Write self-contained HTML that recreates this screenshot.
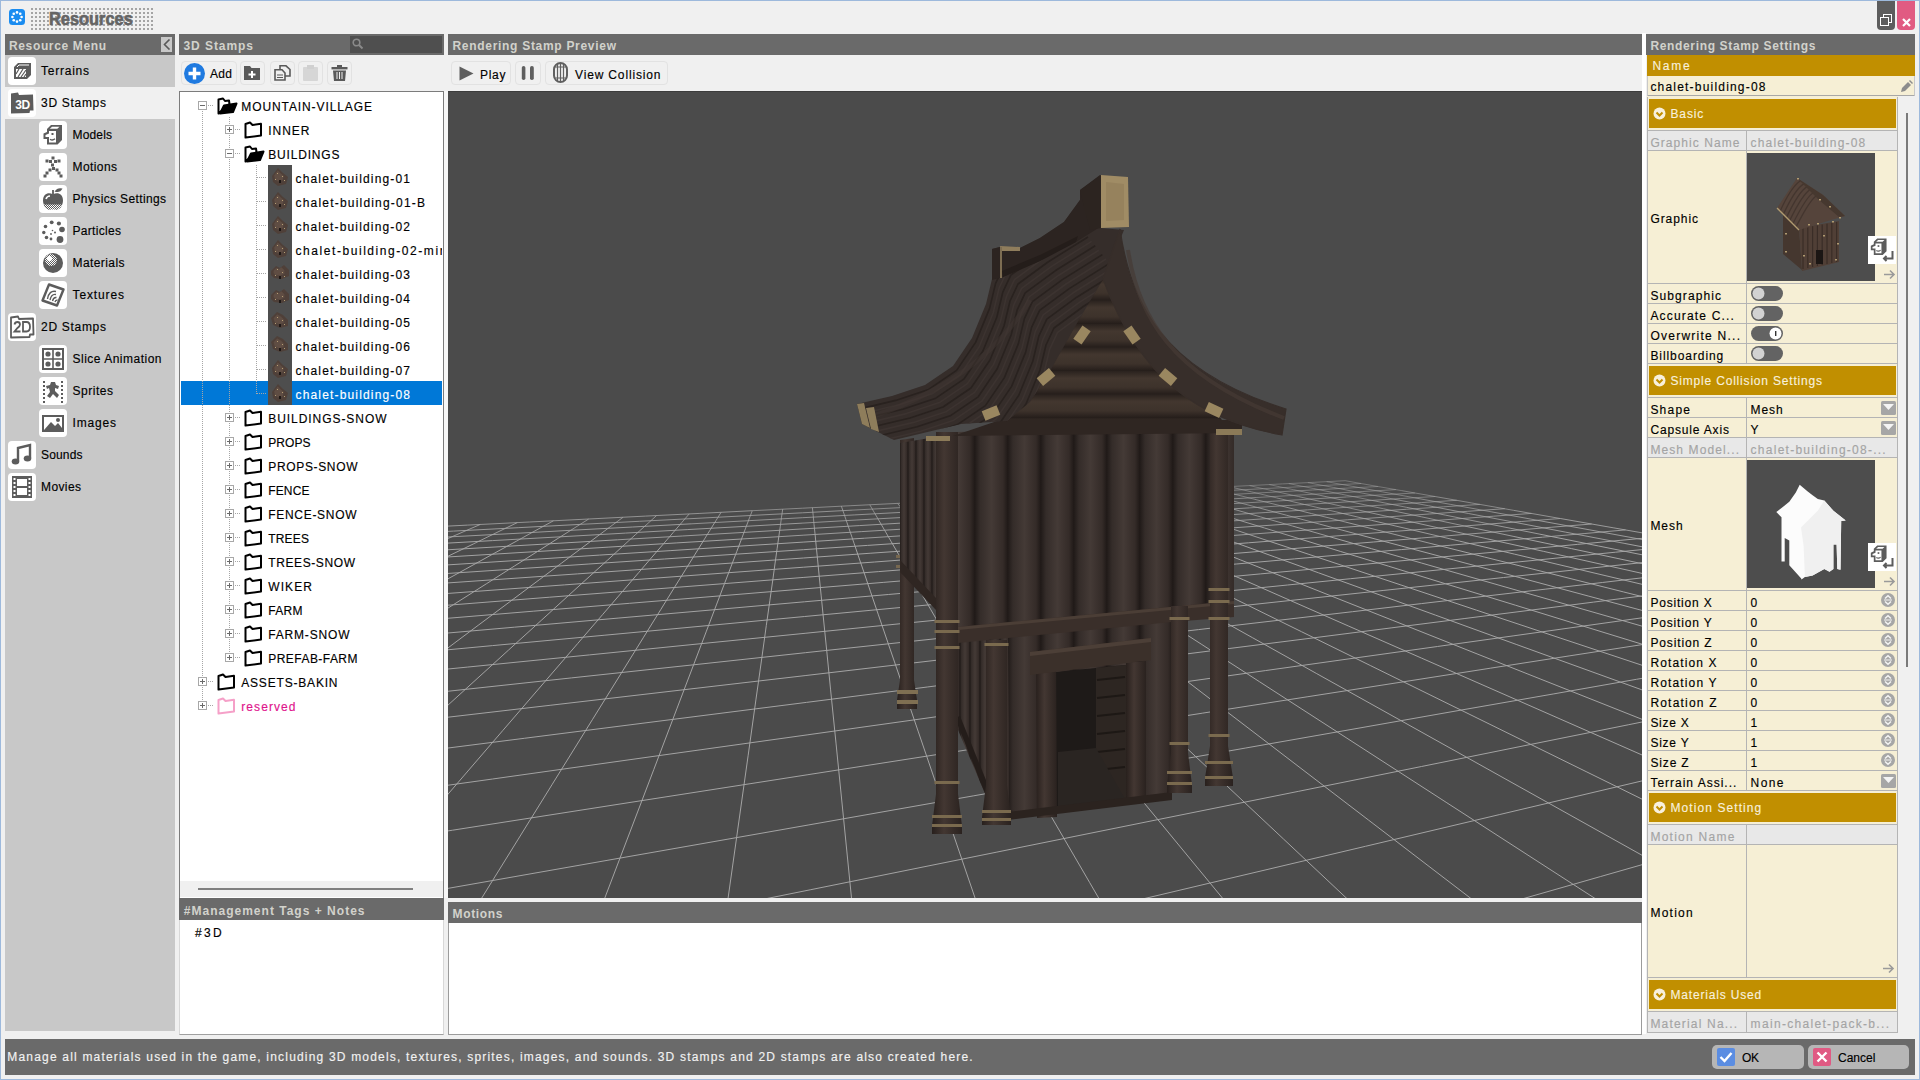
<!DOCTYPE html>
<html><head><meta charset="utf-8"><title>Resources</title>
<style>
html,body{margin:0;padding:0;width:1920px;height:1080px;overflow:hidden;background:#f0f0f0}
.a{position:absolute}
.t{font-family:"Liberation Sans",sans-serif;line-height:14px;white-space:pre;-webkit-text-stroke:0.15px currentColor}
svg{position:absolute;overflow:hidden}
</style></head><body>
<div class="a" style="left:0px;top:0px;width:1920px;height:1080px;background:#f0f0f0;"></div>
<div class="a" style="left:0;top:0;width:1918px;height:1078px;border:1px solid #9db9dc"></div>
<svg class="a" style="left:9px;top:9px;" width="16" height="16" viewBox="0 0 16 16"><rect x="0" y="0" width="16" height="16" rx="3.5" fill="#1a8cf0"/><circle cx="12.60" cy="8.00" r="1.3" fill="#fff"/><circle cx="11.25" cy="11.25" r="1.3" fill="#fff"/><circle cx="8.00" cy="12.60" r="1.3" fill="#fff"/><circle cx="4.75" cy="11.25" r="1.3" fill="#fff"/><circle cx="3.40" cy="8.00" r="1.3" fill="#fff"/><circle cx="4.75" cy="4.75" r="1.3" fill="#fff"/><circle cx="8.00" cy="3.40" r="1.3" fill="#fff"/><circle cx="11.25" cy="4.75" r="1.3" fill="#fff"/></svg>
<svg class="a" style="left:31px;top:8px" width="122" height="22" viewBox="0 0 122 22"><defs><pattern id="tdots" patternUnits="userSpaceOnUse" width="4" height="4"><rect width="2" height="2" fill="#a4a4a4"/></pattern></defs><rect width="122" height="22" fill="url(#tdots)"/></svg>
<div class="a" style="left:49px;top:6.5px;font:bold 19px 'Liberation Sans';line-height:24px;color:#646464;-webkit-text-stroke:0.7px #646464;transform:scaleX(0.862);transform-origin:0 0;white-space:pre;text-shadow:0 0 1px #f0f0f0">Resources</div>
<div class="a" style="left:1877px;top:1px;width:18px;height:29px;background:#5d5d5d;border-radius:0 0 4px 4px"></div>
<svg class="a" style="left:1880px;top:14px;" width="12" height="12" viewBox="0 0 12 12"><rect x="3.5" y="0.5" width="8" height="8" fill="none" stroke="#fff" stroke-width="1"/><rect x="0.5" y="3.5" width="8" height="8" fill="#5d5d5d" stroke="#fff" stroke-width="1"/></svg>
<div class="a" style="left:1897px;top:1px;width:18px;height:29px;background:#e15b82;border-radius:0 0 4px 4px"></div>
<svg class="a" style="left:1902px;top:18px;" width="9" height="9" viewBox="0 0 9 9"><path d="M1 1L8 8M8 1L1 8" stroke="#fff" stroke-width="2.2"/></svg>
<div class="a" style="left:5px;top:34px;width:170px;height:21px;background:#6a6a6a;"></div>
<div class="a t" style="left:9.00px;top:39px;color:#d2d2cc;font-size:12px;font-weight:700;letter-spacing:0.637px;-webkit-text-stroke:0;">Resource Menu</div>
<div class="a" style="left:161px;top:37px;width:11px;height:15px;background:#c8c8c8;"></div>
<svg class="a" style="left:163px;top:39px;" width="8" height="11" viewBox="0 0 8 11"><path d="M6.5 0.5L1.5 5.5L6.5 10.5" fill="none" stroke="#5a5a5a" stroke-width="1.6"/></svg>
<div class="a" style="left:5px;top:55px;width:170px;height:976px;background:#c8c8c8;"></div>
<div class="a" style="left:5px;top:87px;width:170px;height:32px;background:#f0f0f0;"></div>
<div class="a" style="left:8px;top:57px;width:28px;height:28px;background:#fff;border-radius:4px"></div>
<svg class="a" style="left:8px;top:57px;" width="28" height="28" viewBox="0 0 28 28"><path d="M6 10L10 6L23 6L23 18L19 22L6 22Z" fill="#5c5c5c"/><rect x="8" y="12" width="10" height="8" fill="#fff"/><path d="M8 17L11 12M10 20L15 12M13 20L18 13M16 20L18 17" stroke="#5c5c5c" stroke-width="1.2"/><path d="M9 10L11 8L21 8" stroke="#fff" stroke-width="1" fill="none"/></svg>
<div class="a t" style="left:41.00px;top:64px;color:#000;font-size:12px;font-weight:400;letter-spacing:0.759px;">Terrains</div>
<div class="a" style="left:8px;top:89px;width:28px;height:28px;background:#fff;border-radius:4px"></div>
<svg class="a" style="left:8px;top:89px;" width="28" height="28" viewBox="0 0 28 28"><path d="M3 7L3 4.5L10 3.5L11 6L25 5.5L25.5 21.5L22 21.5L21.5 24L3 24.5Z" fill="#5c5c5c"/><text x="14.5" y="19.5" font-family="Liberation Sans" font-weight="bold" font-size="12" fill="#fff" text-anchor="middle" letter-spacing="-0.5">3D</text></svg>
<div class="a t" style="left:41.00px;top:96px;color:#000;font-size:12px;font-weight:400;letter-spacing:0.705px;">3D Stamps</div>
<div class="a" style="left:39px;top:121px;width:28px;height:28px;background:#fff;border-radius:4px"></div>
<svg class="a" style="left:39px;top:121px;" width="28" height="28" viewBox="0 0 28 28"><path d="M8 8L12 4L23 4L23 19L18.5 23.5L8 23.5L8 18L4.5 18L4.5 12.5L8 11Z" fill="#5c5c5c"/><path d="M10 10L17 10L17 21.5L10 21.5L10 16L6.5 16L6.5 14L10 12.5Z" fill="#fff"/><path d="M10.8 7.8L13 5.8L20.5 5.8L18.3 7.8Z" fill="#fff"/><rect x="12.5" y="12" width="2" height="2" fill="#5c5c5c"/><path d="M11 18.2Q13.5 20 16 17.8" stroke="#5c5c5c" stroke-width="1.4" fill="none"/></svg>
<div class="a t" style="left:72.50px;top:128px;color:#000;font-size:12px;font-weight:400;letter-spacing:0.163px;">Models</div>
<div class="a" style="left:39px;top:153px;width:28px;height:28px;background:#fff;border-radius:4px"></div>
<svg class="a" style="left:39px;top:153px;" width="28" height="28" viewBox="0 0 28 28"><rect x="12.5" y="3.5" width="3" height="3" fill="#5c5c5c"/><rect x="6.5" y="6.5" width="3" height="3" fill="#5c5c5c"/><rect x="10.0" y="7.0" width="3" height="3" fill="#5c5c5c"/><rect x="15.0" y="7.0" width="3" height="3" fill="#5c5c5c"/><rect x="18.5" y="6.5" width="3" height="3" fill="#5c5c5c"/><rect x="12.0" y="10.5" width="3" height="3" fill="#5c5c5c"/><rect x="13.0" y="14.0" width="3" height="3" fill="#5c5c5c"/><rect x="9.5" y="15.5" width="3" height="3" fill="#5c5c5c"/><rect x="16.5" y="15.5" width="3" height="3" fill="#5c5c5c"/><rect x="6.5" y="18.5" width="3" height="3" fill="#5c5c5c"/><rect x="18.5" y="18.5" width="3" height="3" fill="#5c5c5c"/><rect x="4.5" y="21.5" width="3" height="3" fill="#5c5c5c"/><rect x="20.5" y="21.5" width="3" height="3" fill="#5c5c5c"/></svg>
<div class="a t" style="left:72.50px;top:160px;color:#000;font-size:12px;font-weight:400;letter-spacing:0.411px;">Motions</div>
<div class="a" style="left:39px;top:185px;width:28px;height:28px;background:#fff;border-radius:4px"></div>
<svg class="a" style="left:39px;top:185px;" width="28" height="28" viewBox="0 0 28 28"><defs><pattern id="dith2" patternUnits="userSpaceOnUse" width="2" height="2"><rect width="2" height="2" fill="#5c5c5c"/><rect width="1" height="1" fill="#fff"/><rect x="1" y="1" width="1" height="1" fill="#fff"/></pattern></defs><path d="M14 9.5C10 7 4 8.5 4 15.5C4 20.5 7.5 24.5 10.5 24.5C12 24.5 13 23.8 14 23.8C15 23.8 16 24.5 17.5 24.5C20.5 24.5 24 20.5 24 15.5C24 8.5 18 7 14 9.5Z" fill="#5c5c5c"/><path d="M14 10L14 5" stroke="#5c5c5c" stroke-width="1.8"/><path d="M15.5 6.5Q18.5 2 23.5 3.5Q21 8.5 15.5 6.5Z" fill="#5c5c5c"/><path d="M7 14Q8 11 11 11" stroke="#fff" stroke-width="1.6" fill="none"/><path d="M4.8 19.5L23.2 19.5Q22 23 19 24.5L9 24.5Q6 23 4.8 19.5Z" fill="url(#dith2)"/></svg>
<div class="a t" style="left:72.50px;top:192px;color:#000;font-size:12px;font-weight:400;letter-spacing:0.364px;">Physics Settings</div>
<div class="a" style="left:39px;top:217px;width:28px;height:28px;background:#fff;border-radius:4px"></div>
<svg class="a" style="left:39px;top:217px;" width="28" height="28" viewBox="0 0 28 28"><circle cx="12.7" cy="5.3" r="1.9" fill="#5c5c5c"/><circle cx="19.9" cy="6.5" r="2.1" fill="#5c5c5c"/><circle cx="6.5" cy="9.5" r="1.8" fill="#5c5c5c"/><circle cx="23" cy="12.5" r="2.8" fill="#5c5c5c"/><circle cx="4.8" cy="15.5" r="1.7" fill="#5c5c5c"/><circle cx="7.5" cy="20.5" r="1.8" fill="#5c5c5c"/><circle cx="12" cy="22" r="1.4" fill="#5c5c5c"/><circle cx="21" cy="22.5" r="3.4" fill="#5c5c5c"/><circle cx="13.5" cy="13.5" r="0.8" fill="#5c5c5c"/><circle cx="16" cy="15.5" r="1.0" fill="#5c5c5c"/><circle cx="12" cy="17" r="0.9" fill="#5c5c5c"/></svg>
<div class="a t" style="left:72.50px;top:224px;color:#000;font-size:12px;font-weight:400;letter-spacing:0.311px;">Particles</div>
<div class="a" style="left:39px;top:249px;width:28px;height:28px;background:#fff;border-radius:4px"></div>
<svg class="a" style="left:39px;top:249px;" width="28" height="28" viewBox="0 0 28 28"><defs><pattern id="dith" patternUnits="userSpaceOnUse" width="2" height="2"><rect width="1" height="1" fill="#fff"/><rect x="1" y="1" width="1" height="1" fill="#fff"/></pattern></defs><circle cx="14" cy="14" r="10" fill="#5c5c5c"/><circle cx="12" cy="11" r="6" fill="url(#dith)"/><circle cx="10.5" cy="9.5" r="2.5" fill="#fff"/></svg>
<div class="a t" style="left:72.50px;top:256px;color:#000;font-size:12px;font-weight:400;letter-spacing:0.414px;">Materials</div>
<div class="a" style="left:39px;top:281px;width:28px;height:28px;background:#fff;border-radius:4px"></div>
<svg class="a" style="left:39px;top:281px;" width="28" height="28" viewBox="0 0 28 28"><path d="M10 3.5L24.5 8.5L18 24.5L3.5 19.5Z" fill="none" stroke="#5c5c5c" stroke-width="2.4" stroke-linejoin="round"/><path d="M8.5 18Q10 9 17 10.5M11 19Q12.5 12.5 17 13.5M13.5 20Q14.5 16 17.5 16.5M16 21Q16.5 19 18.5 19" stroke="#5c5c5c" stroke-width="1.4" fill="none"/></svg>
<div class="a t" style="left:72.50px;top:288px;color:#000;font-size:12px;font-weight:400;letter-spacing:0.877px;">Textures</div>
<div class="a" style="left:8px;top:313px;width:28px;height:28px;background:#fff;border-radius:4px"></div>
<svg class="a" style="left:8px;top:313px;" width="28" height="28" viewBox="0 0 28 28"><path d="M3 7L3 4.5L10 3.5L11 6L25 5.5L25.5 21.5L22 21.5L21.5 24L3 24.5Z" fill="#fff" stroke="#5c5c5c" stroke-width="1.8" stroke-linejoin="round"/><path d="M6.5 11.5Q7 9 9.5 9Q12 9 12 11.5Q12 13 9.5 15L6.5 18.5L12.5 18.5" fill="none" stroke="#5c5c5c" stroke-width="1.8"/><path d="M15 9L18.5 9Q22 9 22 13.8Q22 18.5 18.5 18.5L15 18.5Z" fill="none" stroke="#5c5c5c" stroke-width="1.8"/></svg>
<div class="a t" style="left:41.00px;top:320px;color:#000;font-size:12px;font-weight:400;letter-spacing:0.705px;">2D Stamps</div>
<div class="a" style="left:39px;top:345px;width:28px;height:28px;background:#fff;border-radius:4px"></div>
<svg class="a" style="left:39px;top:345px;" width="28" height="28" viewBox="0 0 28 28"><rect x="4" y="4" width="20" height="20" fill="none" stroke="#5c5c5c" stroke-width="2"/><path d="M14 4L14 24M4 14L24 14" stroke="#5c5c5c" stroke-width="1.6"/><circle cx="9" cy="9" r="2.6" fill="#5c5c5c"/><circle cx="19" cy="9" r="2.6" fill="#5c5c5c"/><circle cx="9" cy="19" r="2.6" fill="#5c5c5c"/><circle cx="19" cy="19" r="2.6" fill="#5c5c5c"/></svg>
<div class="a t" style="left:72.50px;top:352px;color:#000;font-size:12px;font-weight:400;letter-spacing:0.497px;">Slice Animation</div>
<div class="a" style="left:39px;top:377px;width:28px;height:28px;background:#fff;border-radius:4px"></div>
<svg class="a" style="left:39px;top:377px;" width="28" height="28" viewBox="0 0 28 28"><rect x="4" y="4" width="2" height="2" fill="#5c5c5c"/><rect x="22" y="4" width="2" height="2" fill="#5c5c5c"/><rect x="4" y="8" width="2" height="2" fill="#5c5c5c"/><rect x="22" y="8" width="2" height="2" fill="#5c5c5c"/><rect x="4" y="12" width="2" height="2" fill="#5c5c5c"/><rect x="22" y="12" width="2" height="2" fill="#5c5c5c"/><rect x="4" y="16" width="2" height="2" fill="#5c5c5c"/><rect x="22" y="16" width="2" height="2" fill="#5c5c5c"/><rect x="4" y="20" width="2" height="2" fill="#5c5c5c"/><rect x="22" y="20" width="2" height="2" fill="#5c5c5c"/><rect x="4" y="24" width="2" height="2" fill="#5c5c5c"/><rect x="22" y="24" width="2" height="2" fill="#5c5c5c"/><path d="M12 5L16 5L17 8L20 9L19 12L16 11L16 14L20 18L18 21L14 17L11 21L8 19L11 15L10 11L8 12L7 9L11 8Z" fill="#5c5c5c"/></svg>
<div class="a t" style="left:72.50px;top:384px;color:#000;font-size:12px;font-weight:400;letter-spacing:0.523px;">Sprites</div>
<div class="a" style="left:39px;top:409px;width:28px;height:28px;background:#fff;border-radius:4px"></div>
<svg class="a" style="left:39px;top:409px;" width="28" height="28" viewBox="0 0 28 28"><rect x="4" y="7" width="20" height="15" fill="none" stroke="#5c5c5c" stroke-width="2"/><path d="M5 21L12 13L16 17L19 14L23 19L23 21Z" fill="#5c5c5c"/><circle cx="19" cy="11" r="2" fill="#5c5c5c"/></svg>
<div class="a t" style="left:72.50px;top:416px;color:#000;font-size:12px;font-weight:400;letter-spacing:0.828px;">Images</div>
<div class="a" style="left:8px;top:441px;width:28px;height:28px;background:#fff;border-radius:4px"></div>
<svg class="a" style="left:8px;top:441px;" width="28" height="28" viewBox="0 0 28 28"><path d="M10 20L10 7L22 4L22 17" stroke="#5c5c5c" stroke-width="2.4" fill="none"/><ellipse cx="7.5" cy="20.5" rx="3.8" ry="3" fill="#5c5c5c"/><ellipse cx="19.5" cy="17.5" rx="3.8" ry="3" fill="#5c5c5c"/></svg>
<div class="a t" style="left:41.00px;top:448px;color:#000;font-size:12px;font-weight:400;letter-spacing:0.159px;">Sounds</div>
<div class="a" style="left:8px;top:473px;width:28px;height:28px;background:#fff;border-radius:4px"></div>
<svg class="a" style="left:8px;top:473px;" width="28" height="28" viewBox="0 0 28 28"><rect x="4" y="3" width="20" height="22" fill="#5c5c5c"/><rect x="9" y="6" width="10" height="7" fill="#fff"/><rect x="9" y="15" width="10" height="7" fill="#fff"/><rect x="5.5" y="5" width="2" height="2" fill="#fff"/><rect x="20.5" y="5" width="2" height="2" fill="#fff"/><rect x="5.5" y="9" width="2" height="2" fill="#fff"/><rect x="20.5" y="9" width="2" height="2" fill="#fff"/><rect x="5.5" y="13" width="2" height="2" fill="#fff"/><rect x="20.5" y="13" width="2" height="2" fill="#fff"/><rect x="5.5" y="17" width="2" height="2" fill="#fff"/><rect x="20.5" y="17" width="2" height="2" fill="#fff"/><rect x="5.5" y="21" width="2" height="2" fill="#fff"/><rect x="20.5" y="21" width="2" height="2" fill="#fff"/></svg>
<div class="a t" style="left:41.00px;top:480px;color:#000;font-size:12px;font-weight:400;letter-spacing:0.397px;">Movies</div>
<div class="a" style="left:179px;top:34px;width:265px;height:21px;background:#6a6a6a;"></div>
<div class="a t" style="left:183.50px;top:39px;color:#d2d2cc;font-size:12px;font-weight:700;letter-spacing:0.934px;-webkit-text-stroke:0;">3D Stamps</div>
<div class="a" style="left:350px;top:36px;width:92px;height:17px;background:#4f4f4f;"></div>
<svg class="a" style="left:352px;top:38px;" width="12" height="12" viewBox="0 0 12 12"><circle cx="4.5" cy="4.5" r="3.3" fill="none" stroke="#8a8a8a" stroke-width="1.6"/><path d="M7 7L10.5 10.5" stroke="#8a8a8a" stroke-width="2"/></svg>
<div class="a" style="left:181px;top:61px;width:54px;height:22px;border:1px solid #e2e2e2;border-radius:4px;background:#f0f0f0"></div>
<div class="a" style="left:240px;top:61px;width:23px;height:22px;border:1px solid #e2e2e2;border-radius:4px;background:#f0f0f0"></div>
<div class="a" style="left:270px;top:61px;width:23px;height:22px;border:1px solid #e2e2e2;border-radius:4px;background:#f0f0f0"></div>
<div class="a" style="left:298px;top:61px;width:23px;height:22px;border:1px solid #e2e2e2;border-radius:4px;background:#f0f0f0"></div>
<div class="a" style="left:327px;top:61px;width:23px;height:22px;border:1px solid #e2e2e2;border-radius:4px;background:#f0f0f0"></div>
<svg class="a" style="left:184px;top:63px;" width="21" height="21" viewBox="0 0 21 21"><circle cx="10.5" cy="10.5" r="10.5" fill="#1f7ae0"/><path d="M10.5 4.5V16.5M4.5 10.5H16.5" stroke="#fff" stroke-width="3.4"/></svg>
<div class="a t" style="left:210.00px;top:67px;color:#000;font-size:12px;font-weight:400;letter-spacing:0.320px;">Add</div>
<svg class="a" style="left:244px;top:65px;" width="17" height="15" viewBox="0 0 17 15"><path d="M0 1L6 1L7.5 3L16 3L16 15L0 15Z" fill="#5a5a5a"/><path d="M8 6V13M4.5 9.5H11.5" stroke="#fff" stroke-width="2"/></svg>
<svg class="a" style="left:274px;top:65px;" width="17" height="16" viewBox="0 0 17 16"><path d="M6 0.8H12L16 4.5V11H6Z" fill="none" stroke="#5a5a5a" stroke-width="1.6"/><path d="M1 4.8H8L11 8V15H1Z" fill="#f0f0f0" stroke="#5a5a5a" stroke-width="1.6"/><path d="M3 10H9M3 12.5H9" stroke="#5a5a5a" stroke-width="1.1"/></svg>
<svg class="a" style="left:302px;top:65px;" width="17" height="16" viewBox="0 0 17 16"><rect x="1" y="2" width="15" height="14" rx="1" fill="#d6d6d6"/><rect x="5" y="0" width="7" height="4" fill="#d0d0d0"/></svg>
<svg class="a" style="left:331px;top:65px;" width="17" height="16" viewBox="0 0 17 16"><rect x="0.5" y="2" width="16" height="2.4" fill="#5a5a5a"/><rect x="6" y="0" width="5" height="2" fill="#5a5a5a"/><path d="M2 5.5H15L14 16H3Z" fill="#5a5a5a"/><path d="M6 7V14M8.5 7V14M11 7V14" stroke="#f0f0f0" stroke-width="1"/></svg>
<div class="a" style="left:179px;top:91px;width:265px;height:807px;background:#ffffff;box-sizing:border-box;border-top:1px solid #7c7c7c;border-left:1px solid #7c7c7c;border-right:1px solid #7c7c7c"></div>
<div class="a" style="left:181px;top:381px;width:261px;height:24px;background:#0078d7;"></div>
<div class="a" style="left:202px;top:111px;width:1px;height:590px;background:repeating-linear-gradient(to bottom,#a6a6a6 0 1px,transparent 1px 2px)"></div>
<div class="a" style="left:229px;top:117px;width:1px;height:536px;background:repeating-linear-gradient(to bottom,#a6a6a6 0 1px,transparent 1px 2px)"></div>
<div class="a" style="left:256px;top:165px;width:1px;height:230px;background:repeating-linear-gradient(to bottom,#a6a6a6 0 1px,transparent 1px 2px)"></div>
<svg class="a" style="left:198px;top:101px;" width="9" height="9" viewBox="0 0 9 9"><rect x="0.5" y="0.5" width="8" height="8" fill="#fff" stroke="#a8a8a8" stroke-width="1"/><path d="M2 4.5H7" stroke="#6a6a6a" stroke-width="1"/></svg>
<div class="a" style="left:208px;top:105px;width:6px;height:1px;background:repeating-linear-gradient(to right,#a6a6a6 0 1px,transparent 1px 2px)"></div>
<svg class="a" style="left:217px;top:97px;" width="21" height="18" viewBox="0 0 21 18"><path d="M1.5 2.5L6 1.5L8 4L12 3.5L12.5 7L1.5 16.5Z" fill="#fff" stroke="#000" stroke-width="2" stroke-linejoin="round"/><path d="M3 16.5L7 8.5L19.5 6.5L16 15Z" fill="#000" stroke="#000" stroke-width="2" stroke-linejoin="round"/></svg>
<div class="a t" style="left:241.25px;top:100px;color:#000000;font-size:12px;font-weight:400;letter-spacing:0.907px;">MOUNTAIN-VILLAGE</div>
<svg class="a" style="left:225px;top:125px;" width="9" height="9" viewBox="0 0 9 9"><rect x="0.5" y="0.5" width="8" height="8" fill="#fff" stroke="#a8a8a8" stroke-width="1"/><path d="M2 4.5H7" stroke="#6a6a6a" stroke-width="1"/><path d="M4.5 2V7" stroke="#6a6a6a" stroke-width="1"/></svg>
<div class="a" style="left:235px;top:129px;width:6px;height:1px;background:repeating-linear-gradient(to right,#a6a6a6 0 1px,transparent 1px 2px)"></div>
<svg class="a" style="left:244px;top:121px;" width="21" height="18" viewBox="0 0 21 18"><path d="M1.5 3L6 1.5L8.5 4L17 2.8L17 14.5L1.5 16.5Z" fill="#fff" stroke="#000" stroke-width="2" stroke-linejoin="round"/></svg>
<div class="a t" style="left:268.25px;top:124px;color:#000000;font-size:12px;font-weight:400;letter-spacing:0.977px;">INNER</div>
<svg class="a" style="left:225px;top:149px;" width="9" height="9" viewBox="0 0 9 9"><rect x="0.5" y="0.5" width="8" height="8" fill="#fff" stroke="#a8a8a8" stroke-width="1"/><path d="M2 4.5H7" stroke="#6a6a6a" stroke-width="1"/></svg>
<div class="a" style="left:235px;top:153px;width:6px;height:1px;background:repeating-linear-gradient(to right,#a6a6a6 0 1px,transparent 1px 2px)"></div>
<svg class="a" style="left:244px;top:145px;" width="21" height="18" viewBox="0 0 21 18"><path d="M1.5 2.5L6 1.5L8 4L12 3.5L12.5 7L1.5 16.5Z" fill="#fff" stroke="#000" stroke-width="2" stroke-linejoin="round"/><path d="M3 16.5L7 8.5L19.5 6.5L16 15Z" fill="#000" stroke="#000" stroke-width="2" stroke-linejoin="round"/></svg>
<div class="a t" style="left:268.25px;top:148px;color:#000000;font-size:12px;font-weight:400;letter-spacing:0.820px;">BUILDINGS</div>
<div class="a" style="left:257px;top:177px;width:10px;height:1px;background:repeating-linear-gradient(to right,#a6a6a6 0 1px,transparent 1px 2px)"></div>
<div class="a t" style="left:295.50px;top:172px;color:#000000;font-size:12px;font-weight:400;letter-spacing:1.163px;">chalet-building-01</div>
<div class="a" style="left:257px;top:201px;width:10px;height:1px;background:repeating-linear-gradient(to right,#a6a6a6 0 1px,transparent 1px 2px)"></div>
<div class="a t" style="left:295.50px;top:196px;color:#000000;font-size:12px;font-weight:400;letter-spacing:1.198px;">chalet-building-01-B</div>
<div class="a" style="left:257px;top:225px;width:10px;height:1px;background:repeating-linear-gradient(to right,#a6a6a6 0 1px,transparent 1px 2px)"></div>
<div class="a t" style="left:295.50px;top:220px;color:#000000;font-size:12px;font-weight:400;letter-spacing:1.163px;">chalet-building-02</div>
<div class="a" style="left:257px;top:249px;width:10px;height:1px;background:repeating-linear-gradient(to right,#a6a6a6 0 1px,transparent 1px 2px)"></div>
<div class="a t" style="left:295.50px;top:244px;color:#000000;font-size:12px;font-weight:400;letter-spacing:1.560px;">chalet-building-02-mirror</div>
<div class="a" style="left:257px;top:273px;width:10px;height:1px;background:repeating-linear-gradient(to right,#a6a6a6 0 1px,transparent 1px 2px)"></div>
<div class="a t" style="left:295.50px;top:268px;color:#000000;font-size:12px;font-weight:400;letter-spacing:1.163px;">chalet-building-03</div>
<div class="a" style="left:257px;top:297px;width:10px;height:1px;background:repeating-linear-gradient(to right,#a6a6a6 0 1px,transparent 1px 2px)"></div>
<div class="a t" style="left:295.50px;top:292px;color:#000000;font-size:12px;font-weight:400;letter-spacing:1.163px;">chalet-building-04</div>
<div class="a" style="left:257px;top:321px;width:10px;height:1px;background:repeating-linear-gradient(to right,#a6a6a6 0 1px,transparent 1px 2px)"></div>
<div class="a t" style="left:295.50px;top:316px;color:#000000;font-size:12px;font-weight:400;letter-spacing:1.163px;">chalet-building-05</div>
<div class="a" style="left:257px;top:345px;width:10px;height:1px;background:repeating-linear-gradient(to right,#a6a6a6 0 1px,transparent 1px 2px)"></div>
<div class="a t" style="left:295.50px;top:340px;color:#000000;font-size:12px;font-weight:400;letter-spacing:1.163px;">chalet-building-06</div>
<div class="a" style="left:257px;top:369px;width:10px;height:1px;background:repeating-linear-gradient(to right,#a6a6a6 0 1px,transparent 1px 2px)"></div>
<div class="a t" style="left:295.50px;top:364px;color:#000000;font-size:12px;font-weight:400;letter-spacing:1.163px;">chalet-building-07</div>
<div class="a" style="left:257px;top:393px;width:10px;height:1px;background:repeating-linear-gradient(to right,#a6a6a6 0 1px,transparent 1px 2px)"></div>
<div class="a t" style="left:295.50px;top:388px;color:#ffffff;font-size:12px;font-weight:400;letter-spacing:1.163px;">chalet-building-08</div>
<svg class="a" style="left:225px;top:413px;" width="9" height="9" viewBox="0 0 9 9"><rect x="0.5" y="0.5" width="8" height="8" fill="#fff" stroke="#a8a8a8" stroke-width="1"/><path d="M2 4.5H7" stroke="#6a6a6a" stroke-width="1"/><path d="M4.5 2V7" stroke="#6a6a6a" stroke-width="1"/></svg>
<div class="a" style="left:235px;top:417px;width:6px;height:1px;background:repeating-linear-gradient(to right,#a6a6a6 0 1px,transparent 1px 2px)"></div>
<svg class="a" style="left:244px;top:409px;" width="21" height="18" viewBox="0 0 21 18"><path d="M1.5 3L6 1.5L8.5 4L17 2.8L17 14.5L1.5 16.5Z" fill="#fff" stroke="#000" stroke-width="2" stroke-linejoin="round"/></svg>
<div class="a t" style="left:268.25px;top:412px;color:#000000;font-size:12px;font-weight:400;letter-spacing:0.941px;">BUILDINGS-SNOW</div>
<svg class="a" style="left:225px;top:437px;" width="9" height="9" viewBox="0 0 9 9"><rect x="0.5" y="0.5" width="8" height="8" fill="#fff" stroke="#a8a8a8" stroke-width="1"/><path d="M2 4.5H7" stroke="#6a6a6a" stroke-width="1"/><path d="M4.5 2V7" stroke="#6a6a6a" stroke-width="1"/></svg>
<div class="a" style="left:235px;top:441px;width:6px;height:1px;background:repeating-linear-gradient(to right,#a6a6a6 0 1px,transparent 1px 2px)"></div>
<svg class="a" style="left:244px;top:433px;" width="21" height="18" viewBox="0 0 21 18"><path d="M1.5 3L6 1.5L8.5 4L17 2.8L17 14.5L1.5 16.5Z" fill="#fff" stroke="#000" stroke-width="2" stroke-linejoin="round"/></svg>
<div class="a t" style="left:268.25px;top:436px;color:#000000;font-size:12px;font-weight:400;letter-spacing:0.059px;">PROPS</div>
<svg class="a" style="left:225px;top:461px;" width="9" height="9" viewBox="0 0 9 9"><rect x="0.5" y="0.5" width="8" height="8" fill="#fff" stroke="#a8a8a8" stroke-width="1"/><path d="M2 4.5H7" stroke="#6a6a6a" stroke-width="1"/><path d="M4.5 2V7" stroke="#6a6a6a" stroke-width="1"/></svg>
<div class="a" style="left:235px;top:465px;width:6px;height:1px;background:repeating-linear-gradient(to right,#a6a6a6 0 1px,transparent 1px 2px)"></div>
<svg class="a" style="left:244px;top:457px;" width="21" height="18" viewBox="0 0 21 18"><path d="M1.5 3L6 1.5L8.5 4L17 2.8L17 14.5L1.5 16.5Z" fill="#fff" stroke="#000" stroke-width="2" stroke-linejoin="round"/></svg>
<div class="a t" style="left:268.25px;top:460px;color:#000000;font-size:12px;font-weight:400;letter-spacing:0.656px;">PROPS-SNOW</div>
<svg class="a" style="left:225px;top:485px;" width="9" height="9" viewBox="0 0 9 9"><rect x="0.5" y="0.5" width="8" height="8" fill="#fff" stroke="#a8a8a8" stroke-width="1"/><path d="M2 4.5H7" stroke="#6a6a6a" stroke-width="1"/><path d="M4.5 2V7" stroke="#6a6a6a" stroke-width="1"/></svg>
<div class="a" style="left:235px;top:489px;width:6px;height:1px;background:repeating-linear-gradient(to right,#a6a6a6 0 1px,transparent 1px 2px)"></div>
<svg class="a" style="left:244px;top:481px;" width="21" height="18" viewBox="0 0 21 18"><path d="M1.5 3L6 1.5L8.5 4L17 2.8L17 14.5L1.5 16.5Z" fill="#fff" stroke="#000" stroke-width="2" stroke-linejoin="round"/></svg>
<div class="a t" style="left:268.25px;top:484px;color:#000000;font-size:12px;font-weight:400;letter-spacing:0.145px;">FENCE</div>
<svg class="a" style="left:225px;top:509px;" width="9" height="9" viewBox="0 0 9 9"><rect x="0.5" y="0.5" width="8" height="8" fill="#fff" stroke="#a8a8a8" stroke-width="1"/><path d="M2 4.5H7" stroke="#6a6a6a" stroke-width="1"/><path d="M4.5 2V7" stroke="#6a6a6a" stroke-width="1"/></svg>
<div class="a" style="left:235px;top:513px;width:6px;height:1px;background:repeating-linear-gradient(to right,#a6a6a6 0 1px,transparent 1px 2px)"></div>
<svg class="a" style="left:244px;top:505px;" width="21" height="18" viewBox="0 0 21 18"><path d="M1.5 3L6 1.5L8.5 4L17 2.8L17 14.5L1.5 16.5Z" fill="#fff" stroke="#000" stroke-width="2" stroke-linejoin="round"/></svg>
<div class="a t" style="left:268.25px;top:508px;color:#000000;font-size:12px;font-weight:400;letter-spacing:0.694px;">FENCE-SNOW</div>
<svg class="a" style="left:225px;top:533px;" width="9" height="9" viewBox="0 0 9 9"><rect x="0.5" y="0.5" width="8" height="8" fill="#fff" stroke="#a8a8a8" stroke-width="1"/><path d="M2 4.5H7" stroke="#6a6a6a" stroke-width="1"/><path d="M4.5 2V7" stroke="#6a6a6a" stroke-width="1"/></svg>
<div class="a" style="left:235px;top:537px;width:6px;height:1px;background:repeating-linear-gradient(to right,#a6a6a6 0 1px,transparent 1px 2px)"></div>
<svg class="a" style="left:244px;top:529px;" width="21" height="18" viewBox="0 0 21 18"><path d="M1.5 3L6 1.5L8.5 4L17 2.8L17 14.5L1.5 16.5Z" fill="#fff" stroke="#000" stroke-width="2" stroke-linejoin="round"/></svg>
<div class="a t" style="left:268.25px;top:532px;color:#000000;font-size:12px;font-weight:400;letter-spacing:0.184px;">TREES</div>
<svg class="a" style="left:225px;top:557px;" width="9" height="9" viewBox="0 0 9 9"><rect x="0.5" y="0.5" width="8" height="8" fill="#fff" stroke="#a8a8a8" stroke-width="1"/><path d="M2 4.5H7" stroke="#6a6a6a" stroke-width="1"/><path d="M4.5 2V7" stroke="#6a6a6a" stroke-width="1"/></svg>
<div class="a" style="left:235px;top:561px;width:6px;height:1px;background:repeating-linear-gradient(to right,#a6a6a6 0 1px,transparent 1px 2px)"></div>
<svg class="a" style="left:244px;top:553px;" width="21" height="18" viewBox="0 0 21 18"><path d="M1.5 3L6 1.5L8.5 4L17 2.8L17 14.5L1.5 16.5Z" fill="#fff" stroke="#000" stroke-width="2" stroke-linejoin="round"/></svg>
<div class="a t" style="left:268.25px;top:556px;color:#000000;font-size:12px;font-weight:400;letter-spacing:0.601px;">TREES-SNOW</div>
<svg class="a" style="left:225px;top:581px;" width="9" height="9" viewBox="0 0 9 9"><rect x="0.5" y="0.5" width="8" height="8" fill="#fff" stroke="#a8a8a8" stroke-width="1"/><path d="M2 4.5H7" stroke="#6a6a6a" stroke-width="1"/><path d="M4.5 2V7" stroke="#6a6a6a" stroke-width="1"/></svg>
<div class="a" style="left:235px;top:585px;width:6px;height:1px;background:repeating-linear-gradient(to right,#a6a6a6 0 1px,transparent 1px 2px)"></div>
<svg class="a" style="left:244px;top:577px;" width="21" height="18" viewBox="0 0 21 18"><path d="M1.5 3L6 1.5L8.5 4L17 2.8L17 14.5L1.5 16.5Z" fill="#fff" stroke="#000" stroke-width="2" stroke-linejoin="round"/></svg>
<div class="a t" style="left:268.25px;top:580px;color:#000000;font-size:12px;font-weight:400;letter-spacing:1.102px;">WIKER</div>
<svg class="a" style="left:225px;top:605px;" width="9" height="9" viewBox="0 0 9 9"><rect x="0.5" y="0.5" width="8" height="8" fill="#fff" stroke="#a8a8a8" stroke-width="1"/><path d="M2 4.5H7" stroke="#6a6a6a" stroke-width="1"/><path d="M4.5 2V7" stroke="#6a6a6a" stroke-width="1"/></svg>
<div class="a" style="left:235px;top:609px;width:6px;height:1px;background:repeating-linear-gradient(to right,#a6a6a6 0 1px,transparent 1px 2px)"></div>
<svg class="a" style="left:244px;top:601px;" width="21" height="18" viewBox="0 0 21 18"><path d="M1.5 3L6 1.5L8.5 4L17 2.8L17 14.5L1.5 16.5Z" fill="#fff" stroke="#000" stroke-width="2" stroke-linejoin="round"/></svg>
<div class="a t" style="left:268.25px;top:604px;color:#000000;font-size:12px;font-weight:400;letter-spacing:0.302px;">FARM</div>
<svg class="a" style="left:225px;top:629px;" width="9" height="9" viewBox="0 0 9 9"><rect x="0.5" y="0.5" width="8" height="8" fill="#fff" stroke="#a8a8a8" stroke-width="1"/><path d="M2 4.5H7" stroke="#6a6a6a" stroke-width="1"/><path d="M4.5 2V7" stroke="#6a6a6a" stroke-width="1"/></svg>
<div class="a" style="left:235px;top:633px;width:6px;height:1px;background:repeating-linear-gradient(to right,#a6a6a6 0 1px,transparent 1px 2px)"></div>
<svg class="a" style="left:244px;top:625px;" width="21" height="18" viewBox="0 0 21 18"><path d="M1.5 3L6 1.5L8.5 4L17 2.8L17 14.5L1.5 16.5Z" fill="#fff" stroke="#000" stroke-width="2" stroke-linejoin="round"/></svg>
<div class="a t" style="left:268.25px;top:628px;color:#000000;font-size:12px;font-weight:400;letter-spacing:0.822px;">FARM-SNOW</div>
<svg class="a" style="left:225px;top:653px;" width="9" height="9" viewBox="0 0 9 9"><rect x="0.5" y="0.5" width="8" height="8" fill="#fff" stroke="#a8a8a8" stroke-width="1"/><path d="M2 4.5H7" stroke="#6a6a6a" stroke-width="1"/><path d="M4.5 2V7" stroke="#6a6a6a" stroke-width="1"/></svg>
<div class="a" style="left:235px;top:657px;width:6px;height:1px;background:repeating-linear-gradient(to right,#a6a6a6 0 1px,transparent 1px 2px)"></div>
<svg class="a" style="left:244px;top:649px;" width="21" height="18" viewBox="0 0 21 18"><path d="M1.5 3L6 1.5L8.5 4L17 2.8L17 14.5L1.5 16.5Z" fill="#fff" stroke="#000" stroke-width="2" stroke-linejoin="round"/></svg>
<div class="a t" style="left:268.25px;top:652px;color:#000000;font-size:12px;font-weight:400;letter-spacing:0.456px;">PREFAB-FARM</div>
<svg class="a" style="left:198px;top:677px;" width="9" height="9" viewBox="0 0 9 9"><rect x="0.5" y="0.5" width="8" height="8" fill="#fff" stroke="#a8a8a8" stroke-width="1"/><path d="M2 4.5H7" stroke="#6a6a6a" stroke-width="1"/><path d="M4.5 2V7" stroke="#6a6a6a" stroke-width="1"/></svg>
<div class="a" style="left:208px;top:681px;width:6px;height:1px;background:repeating-linear-gradient(to right,#a6a6a6 0 1px,transparent 1px 2px)"></div>
<svg class="a" style="left:217px;top:673px;" width="21" height="18" viewBox="0 0 21 18"><path d="M1.5 3L6 1.5L8.5 4L17 2.8L17 14.5L1.5 16.5Z" fill="#fff" stroke="#000" stroke-width="2" stroke-linejoin="round"/></svg>
<div class="a t" style="left:241.25px;top:676px;color:#000000;font-size:12px;font-weight:400;letter-spacing:0.808px;">ASSETS-BAKIN</div>
<svg class="a" style="left:198px;top:701px;" width="9" height="9" viewBox="0 0 9 9"><rect x="0.5" y="0.5" width="8" height="8" fill="#fff" stroke="#a8a8a8" stroke-width="1"/><path d="M2 4.5H7" stroke="#6a6a6a" stroke-width="1"/><path d="M4.5 2V7" stroke="#6a6a6a" stroke-width="1"/></svg>
<div class="a" style="left:208px;top:705px;width:6px;height:1px;background:repeating-linear-gradient(to right,#a6a6a6 0 1px,transparent 1px 2px)"></div>
<svg class="a" style="left:217px;top:697px;" width="21" height="18" viewBox="0 0 21 18"><path d="M1.5 3L6 1.5L8.5 4L17 2.8L17 14.5L1.5 16.5Z" fill="#fff" stroke="#f5a0c8" stroke-width="2" stroke-linejoin="round"/></svg>
<div class="a t" style="left:241.25px;top:700px;color:#e0148c;font-size:12px;font-weight:400;letter-spacing:1.080px;">reserved</div>
<div class="a" style="left:268px;top:165px;width:24px;height:240px;background:#4e4e4e;"></div>
<svg class="a" style="left:268px;top:165px;" width="24" height="24" viewBox="0 0 24 24"><polygon points="4,11 10,3 15,8 20,12 18,19 10,21 5,17" fill="#4f4039"/><polygon points="6.2,10.4 9.8,5.6 12.8,8.6 15.8,11.0 14.6,15.2 9.8,16.4 6.8,14.0" fill="#5f4d43"/><rect x="9" y="8" width="1" height="1" fill="#b49d74"/><rect x="14" y="11" width="1" height="1" fill="#b49d74"/><rect x="7" y="14" width="1" height="1" fill="#b49d74"/><rect x="16" y="15" width="1" height="1" fill="#b49d74"/><rect x="12" y="17" width="1" height="1" fill="#b49d74"/><rect x="11" y="15" width="2" height="3" fill="#1e1816"/></svg>
<svg class="a" style="left:268px;top:189px;" width="24" height="24" viewBox="0 0 24 24"><polygon points="4,11 10,3 15,8 20,12 18,19 10,21 5,17" fill="#4f4039"/><polygon points="6.2,10.4 9.8,5.6 12.8,8.6 15.8,11.0 14.6,15.2 9.8,16.4 6.8,14.0" fill="#5f4d43"/><rect x="9" y="8" width="1" height="1" fill="#b49d74"/><rect x="14" y="11" width="1" height="1" fill="#b49d74"/><rect x="7" y="14" width="1" height="1" fill="#b49d74"/><rect x="16" y="15" width="1" height="1" fill="#b49d74"/><rect x="12" y="17" width="1" height="1" fill="#b49d74"/><rect x="11" y="15" width="2" height="3" fill="#1e1816"/></svg>
<svg class="a" style="left:268px;top:213px;" width="24" height="24" viewBox="0 0 24 24"><polygon points="4,11 10,3 15,8 20,12 18,19 10,21 5,17" fill="#4f4039"/><polygon points="6.2,10.4 9.8,5.6 12.8,8.6 15.8,11.0 14.6,15.2 9.8,16.4 6.8,14.0" fill="#5f4d43"/><rect x="9" y="8" width="1" height="1" fill="#b49d74"/><rect x="14" y="11" width="1" height="1" fill="#b49d74"/><rect x="7" y="14" width="1" height="1" fill="#b49d74"/><rect x="16" y="15" width="1" height="1" fill="#b49d74"/><rect x="12" y="17" width="1" height="1" fill="#b49d74"/><rect x="11" y="15" width="2" height="3" fill="#1e1816"/></svg>
<svg class="a" style="left:268px;top:237px;" width="24" height="24" viewBox="0 0 24 24"><polygon points="4,11 10,3 15,8 20,12 18,19 10,21 5,17" fill="#4f4039"/><polygon points="6.2,10.4 9.8,5.6 12.8,8.6 15.8,11.0 14.6,15.2 9.8,16.4 6.8,14.0" fill="#5f4d43"/><rect x="9" y="8" width="1" height="1" fill="#b49d74"/><rect x="14" y="11" width="1" height="1" fill="#b49d74"/><rect x="7" y="14" width="1" height="1" fill="#b49d74"/><rect x="16" y="15" width="1" height="1" fill="#b49d74"/><rect x="12" y="17" width="1" height="1" fill="#b49d74"/><rect x="11" y="15" width="2" height="3" fill="#1e1816"/></svg>
<svg class="a" style="left:268px;top:261px;" width="24" height="24" viewBox="0 0 24 24"><polygon points="3,10 8,5 12,7 16,4 21,9 21,15 14,18 6,17 3,14" fill="#4f4039"/><polygon points="5.6,9.8 8.6,6.8 11.0,8.0 13.4,6.2 16.4,9.2 16.4,12.8 12.2,14.6 7.4,14.0 5.6,12.2" fill="#5f4d43"/><rect x="9" y="8" width="1" height="1" fill="#b49d74"/><rect x="14" y="11" width="1" height="1" fill="#b49d74"/><rect x="7" y="14" width="1" height="1" fill="#b49d74"/><rect x="16" y="15" width="1" height="1" fill="#b49d74"/><rect x="12" y="17" width="1" height="1" fill="#b49d74"/><rect x="11" y="15" width="2" height="3" fill="#1e1816"/></svg>
<svg class="a" style="left:268px;top:285px;" width="24" height="24" viewBox="0 0 24 24"><polygon points="3,10 8,5 12,7 16,4 21,9 21,15 14,18 6,17 3,14" fill="#4f4039"/><polygon points="5.6,9.8 8.6,6.8 11.0,8.0 13.4,6.2 16.4,9.2 16.4,12.8 12.2,14.6 7.4,14.0 5.6,12.2" fill="#5f4d43"/><rect x="9" y="8" width="1" height="1" fill="#b49d74"/><rect x="14" y="11" width="1" height="1" fill="#b49d74"/><rect x="7" y="14" width="1" height="1" fill="#b49d74"/><rect x="16" y="15" width="1" height="1" fill="#b49d74"/><rect x="12" y="17" width="1" height="1" fill="#b49d74"/><rect x="11" y="15" width="2" height="3" fill="#1e1816"/></svg>
<svg class="a" style="left:268px;top:309px;" width="24" height="24" viewBox="0 0 24 24"><polygon points="3,9 9,3 15,6 20,11 20,17 12,19 5,16" fill="#4f4039"/><polygon points="5.6,9.2 9.2,5.6 12.8,7.4 15.8,10.4 15.8,14.0 11.0,15.2 6.8,13.4" fill="#5f4d43"/><rect x="9" y="8" width="1" height="1" fill="#b49d74"/><rect x="14" y="11" width="1" height="1" fill="#b49d74"/><rect x="7" y="14" width="1" height="1" fill="#b49d74"/><rect x="16" y="15" width="1" height="1" fill="#b49d74"/><rect x="12" y="17" width="1" height="1" fill="#b49d74"/><rect x="11" y="15" width="2" height="3" fill="#1e1816"/></svg>
<svg class="a" style="left:268px;top:333px;" width="24" height="24" viewBox="0 0 24 24"><polygon points="3,9 9,3 15,6 20,11 20,17 12,19 5,16" fill="#4f4039"/><polygon points="5.6,9.2 9.2,5.6 12.8,7.4 15.8,10.4 15.8,14.0 11.0,15.2 6.8,13.4" fill="#5f4d43"/><rect x="9" y="8" width="1" height="1" fill="#b49d74"/><rect x="14" y="11" width="1" height="1" fill="#b49d74"/><rect x="7" y="14" width="1" height="1" fill="#b49d74"/><rect x="16" y="15" width="1" height="1" fill="#b49d74"/><rect x="12" y="17" width="1" height="1" fill="#b49d74"/><rect x="11" y="15" width="2" height="3" fill="#1e1816"/></svg>
<svg class="a" style="left:268px;top:357px;" width="24" height="24" viewBox="0 0 24 24"><polygon points="4,11 10,3 15,8 20,12 18,19 10,21 5,17" fill="#4f4039"/><polygon points="6.2,10.4 9.8,5.6 12.8,8.6 15.8,11.0 14.6,15.2 9.8,16.4 6.8,14.0" fill="#5f4d43"/><rect x="9" y="8" width="1" height="1" fill="#b49d74"/><rect x="14" y="11" width="1" height="1" fill="#b49d74"/><rect x="7" y="14" width="1" height="1" fill="#b49d74"/><rect x="16" y="15" width="1" height="1" fill="#b49d74"/><rect x="12" y="17" width="1" height="1" fill="#b49d74"/><rect x="11" y="15" width="2" height="3" fill="#1e1816"/></svg>
<svg class="a" style="left:268px;top:381px;" width="24" height="24" viewBox="0 0 24 24"><polygon points="4,11 10,3 15,8 20,12 18,19 10,21 5,17" fill="#4f4039"/><polygon points="6.2,10.4 9.8,5.6 12.8,8.6 15.8,11.0 14.6,15.2 9.8,16.4 6.8,14.0" fill="#5f4d43"/><rect x="9" y="8" width="1" height="1" fill="#b49d74"/><rect x="14" y="11" width="1" height="1" fill="#b49d74"/><rect x="7" y="14" width="1" height="1" fill="#b49d74"/><rect x="16" y="15" width="1" height="1" fill="#b49d74"/><rect x="12" y="17" width="1" height="1" fill="#b49d74"/><rect x="11" y="15" width="2" height="3" fill="#1e1816"/></svg>
<div class="a" style="left:442px;top:92px;width:1px;height:789px;background:#ffffff;"></div>
<div class="a" style="left:443px;top:91px;width:1px;height:807px;background:#7c7c7c;"></div>
<div class="a" style="left:444px;top:91px;width:4px;height:807px;background:#f7f7f7;"></div>
<div class="a" style="left:180px;top:881px;width:263px;height:16px;background:#f0f0f0;"></div>
<div class="a" style="left:198px;top:888px;width:215px;height:2px;background:#808080;"></div>
<div class="a" style="left:179px;top:898px;width:265px;height:22px;background:#6a6a6a;"></div>
<div class="a t" style="left:183.75px;top:904px;color:#d2d2cc;font-size:12px;font-weight:700;letter-spacing:1.011px;-webkit-text-stroke:0;">#Management Tags + Notes</div>
<div class="a" style="left:179px;top:920px;width:265px;height:115px;background:#ffffff;box-sizing:border-box;border:1px solid #d8d8d8;border-top:none;border-bottom:1px solid #a0a0a0"></div>
<div class="a t" style="left:195.00px;top:926px;color:#000;font-size:12px;font-weight:400;letter-spacing:2.367px;">#3D</div>
<div class="a" style="left:448px;top:34px;width:1194px;height:21px;background:#6a6a6a;"></div>
<div class="a t" style="left:452.50px;top:39px;color:#d2d2cc;font-size:12px;font-weight:700;letter-spacing:0.702px;-webkit-text-stroke:0;">Rendering Stamp Preview</div>
<div class="a" style="left:451px;top:61px;width:58px;height:22px;border:1px solid #e2e2e2;border-radius:4px;background:#f0f0f0"></div>
<div class="a" style="left:515px;top:61px;width:24px;height:22px;border:1px solid #e2e2e2;border-radius:4px;background:#f0f0f0"></div>
<div class="a" style="left:545px;top:61px;width:121px;height:22px;border:1px solid #e2e2e2;border-radius:4px;background:#f0f0f0"></div>
<svg class="a" style="left:459px;top:66px;" width="15" height="15" viewBox="0 0 15 15"><path d="M0.5 0.5L14.5 7.5L0.5 14.5Z" fill="#5f5f5f"/></svg>
<div class="a t" style="left:480.00px;top:68px;color:#000;font-size:12px;font-weight:400;letter-spacing:0.719px;">Play</div>
<svg class="a" style="left:521px;top:65px;" width="14" height="16" viewBox="0 0 14 16"><rect x="0.8" y="1" width="3.6" height="14" rx="1.8" fill="#5f5f5f"/><rect x="9" y="1" width="3.8" height="14" rx="1.8" fill="#5f5f5f"/></svg>
<svg class="a" style="left:553px;top:62px;" width="15" height="21" viewBox="0 0 15 21"><rect x="1" y="1" width="13" height="19" rx="6.5" fill="none" stroke="#5f5f5f" stroke-width="2"/><path d="M4.5 2V19M7.5 2V19M10.5 2V19M2 5H13M2 16H13" stroke="#5f5f5f" stroke-width="1.2"/></svg>
<div class="a t" style="left:575.00px;top:68px;color:#000;font-size:12px;font-weight:400;letter-spacing:0.847px;">View Collision</div>
<svg class="a" style="left:448px;top:91px" width="1194" height="807" viewBox="0 0 1194 807"><rect x="0" y="0" width="1194" height="807" fill="#4b4b4b"/><path d="M897.2 389.7L924.2 394.5M924.2 394.5L954.0 399.7M897.2 389.7L866.3 391.3M866.3 391.3L834.3 392.9M834.3 392.9L801.4 394.6M801.4 394.6L767.4 396.3M767.4 396.3L732.3 398.1M878.7 390.7L905.1 395.5M913.1 392.5L881.5 394.2M881.5 394.2L848.8 395.9M848.8 395.9L815.1 397.7M859.9 391.6L885.6 396.5M929.9 395.5L897.6 397.2M840.8 392.6L865.7 397.6M821.3 393.6L845.4 398.7M801.4 394.6L824.8 399.8" stroke="#a8a8a8" stroke-width="1" fill="none" opacity="0.47" stroke-linecap="butt"/><path d="M954.0 399.7L987.0 405.5M732.3 398.1L695.9 399.9M695.9 399.9L658.4 401.8M658.4 401.8L619.5 403.8M619.5 403.8L579.3 405.8M579.3 405.8L537.6 407.9M905.1 395.5L934.2 400.8M934.2 400.8L966.5 406.8M815.1 397.7L780.3 399.5M780.3 399.5L744.3 401.4M744.3 401.4L707.0 403.3M707.0 403.3L668.4 405.3M668.4 405.3L628.4 407.4M885.6 396.5L913.9 402.0M913.9 402.0L945.5 408.1M897.6 397.2L864.2 399.0M864.2 399.0L829.7 400.9M829.7 400.9L794.0 402.9M794.0 402.9L757.1 404.9M757.1 404.9L718.8 406.9M865.7 397.6L893.3 403.2M893.3 403.2L924.0 409.4M947.8 398.6L914.8 400.5M914.8 400.5L880.6 402.4M880.6 402.4L845.3 404.4M845.3 404.4L808.7 406.5M845.4 398.7L872.2 404.4M966.8 402.0L933.0 403.9M933.0 403.9L898.1 406.0M824.8 399.8L850.7 405.6M987.0 405.5L952.5 407.6M781.1 395.6L803.7 400.9M803.7 400.9L828.7 406.9M760.5 396.7L782.1 402.1M782.1 402.1L806.2 408.2M739.4 397.7L760.2 403.3M760.2 403.3L783.3 409.5M717.9 398.8L737.7 404.5M695.9 399.9L714.8 405.7M673.6 401.0L691.4 407.0M650.7 402.2L667.4 408.3M627.4 403.4L643.0 409.6" stroke="#a8a8a8" stroke-width="1" fill="none" opacity="0.56" stroke-linecap="butt"/><path d="M987.0 405.5L1023.9 412.0M1023.9 412.0L1065.4 419.3M537.6 407.9L494.3 410.1M494.3 410.1L449.5 412.4M449.5 412.4L402.9 414.7M402.9 414.7L354.5 417.2M354.5 417.2L304.3 419.7M966.5 406.8L1002.6 413.4M1002.6 413.4L1043.2 420.8M628.4 407.4L587.0 409.6M587.0 409.6L544.0 411.9M544.0 411.9L499.3 414.2M499.3 414.2L453.0 416.6M453.0 416.6L404.8 419.1M945.5 408.1L980.8 414.8M718.8 406.9L679.1 409.1M679.1 409.1L637.9 411.3M637.9 411.3L595.2 413.7M595.2 413.7L550.8 416.1M550.8 416.1L504.7 418.6M924.0 409.4L958.4 416.3M808.7 406.5L770.7 408.6M770.7 408.6L731.4 410.8M731.4 410.8L690.6 413.1M690.6 413.1L648.2 415.5M648.2 415.5L604.1 418.0M872.2 404.4L902.1 410.7M902.1 410.7L935.6 417.8M898.1 406.0L861.9 408.1M861.9 408.1L824.3 410.3M824.3 410.3L785.4 412.6M785.4 412.6L744.9 415.0M744.9 415.0L702.8 417.5M850.7 405.6L879.6 412.1M879.6 412.1L912.1 419.4M952.5 407.6L916.8 409.8M916.8 409.8L879.6 412.1M879.6 412.1L841.1 414.4M841.1 414.4L801.0 416.9M828.7 406.9L856.7 413.5M856.7 413.5L888.2 420.9M1008.7 409.3L973.4 411.6M973.4 411.6L936.7 413.9M936.7 413.9L898.7 416.3M898.7 416.3L859.1 418.9M806.2 408.2L833.2 414.9M1031.8 413.4L995.7 415.8M995.7 415.8L958.2 418.3M783.3 409.5L809.2 416.4M737.7 404.5L759.8 410.8M759.8 410.8L784.6 417.9M714.8 405.7L735.8 412.2M735.8 412.2L759.4 419.4M691.4 407.0L711.2 413.6M711.2 413.6L733.6 421.0M667.4 408.3L686.1 415.0M643.0 409.6L660.4 416.5M603.6 404.6L618.0 410.9M618.0 410.9L634.1 418.0M579.3 405.8L592.4 412.3M592.4 412.3L607.2 419.5M554.4 407.1L566.3 413.7M566.3 413.7L579.6 421.1M529.0 408.4L539.5 415.1M503.1 409.7L512.2 416.6M476.6 411.0L484.1 418.1M449.5 412.4L455.5 419.6M421.8 413.8L426.1 421.2" stroke="#a8a8a8" stroke-width="1" fill="none" opacity="0.66" stroke-linecap="butt"/><path d="M1065.4 419.3L1112.3 427.5M304.3 419.7L251.9 422.4M251.9 422.4L197.4 425.1M197.4 425.1L140.7 428.0M140.7 428.0L81.4 431.0M81.4 431.0L19.6 434.1M1043.2 420.8L1089.3 429.3M404.8 419.1L354.6 421.8M354.6 421.8L302.4 424.5M302.4 424.5L248.0 427.4M248.0 427.4L191.3 430.3M191.3 430.3L132.1 433.4M980.8 414.8L1020.5 422.5M1020.5 422.5L1065.7 431.1M504.7 418.6L456.7 421.2M456.7 421.2L406.8 423.9M406.8 423.9L354.7 426.7M354.7 426.7L300.5 429.7M300.5 429.7L243.8 432.8M958.4 416.3L997.3 424.1M997.3 424.1L1041.4 433.0M604.1 418.0L558.2 420.6M558.2 420.6L510.5 423.3M510.5 423.3L460.8 426.1M460.8 426.1L408.9 429.0M408.9 429.0L354.8 432.1M935.6 417.8L973.4 425.8M973.4 425.8L1016.5 435.0M702.8 417.5L659.1 420.0M659.1 420.0L613.6 422.7M613.6 422.7L566.2 425.5M566.2 425.5L516.7 428.4M516.7 428.4L465.2 431.4M912.1 419.4L948.9 427.6M801.0 416.9L759.4 419.4M759.4 419.4L716.1 422.1M716.1 422.1L670.9 424.9M670.9 424.9L623.9 427.7M623.9 427.7L574.8 430.8M888.2 420.9L923.8 429.4M859.1 418.9L817.9 421.5M817.9 421.5L775.0 424.2M775.0 424.2L730.3 427.1M730.3 427.1L683.7 430.1M683.7 430.1L635.0 433.2M833.2 414.9L863.6 422.6M863.6 422.6L898.0 431.2M958.2 418.3L919.1 420.9M919.1 420.9L878.5 423.6M878.5 423.6L836.1 426.5M836.1 426.5L791.9 429.4M791.9 429.4L745.7 432.5M809.2 416.4L838.4 424.2M838.4 424.2L871.6 433.1M1056.7 417.7L1019.8 420.3M1019.8 420.3L981.3 423.0M981.3 423.0L941.2 425.8M941.2 425.8L899.4 428.8M899.4 428.8L855.7 431.9M784.6 417.9L812.6 425.9M812.6 425.9L844.4 435.0M1083.5 422.4L1045.6 425.2M1045.6 425.2L1006.2 428.1M1006.2 428.1L965.0 431.2M759.4 419.4L786.1 427.7M1112.3 427.5L1073.6 430.5M733.6 421.0L758.9 429.5M686.1 415.0L707.2 422.6M707.2 422.6L731.1 431.3M660.4 416.5L680.1 424.3M680.1 424.3L702.4 433.2M634.1 418.0L652.3 426.0M652.3 426.0L673.1 435.1M607.2 419.5L623.9 427.7M579.6 421.1L594.7 429.5M539.5 415.1L551.3 422.7M551.3 422.7L564.7 431.4M512.2 416.6L522.3 424.4M522.3 424.4L533.9 433.3M484.1 418.1L492.7 426.1M492.7 426.1L502.3 435.2M455.5 419.6L462.2 427.8M426.1 421.2L431.0 429.6M393.4 415.2L396.0 422.8M396.0 422.8L398.9 431.4M364.4 416.7L365.2 424.5M365.2 424.5L366.0 433.3M334.7 418.2L333.5 426.2M333.5 426.2L332.3 435.3M304.3 419.7L301.1 427.9M273.1 421.3L267.9 429.7M241.2 422.9L233.8 431.5M208.5 424.6L198.8 433.4M175.0 426.3L162.8 435.3M140.7 428.0L125.9 437.3" stroke="#a8a8a8" stroke-width="1" fill="none" opacity="0.76" stroke-linecap="butt"/><path d="M1112.3 427.5L1165.9 436.9M1165.9 436.9L1227.5 447.7M19.6 434.1L-45.1 437.4M-45.1 437.4L-112.7 440.8M-112.7 440.8L-183.5 444.4M-183.5 444.4L-257.7 448.1M1089.3 429.3L1141.9 438.9M1141.9 438.9L1202.6 450.1M132.1 433.4L70.2 436.7M70.2 436.7L5.4 440.1M5.4 440.1L-62.3 443.6M-62.3 443.6L-133.4 447.3M-133.4 447.3L-207.9 451.2M1065.7 431.1L1117.3 441.1M1117.3 441.1L1177.0 452.5M243.8 432.8L184.6 436.0M184.6 436.0L122.7 439.3M122.7 439.3L58.0 442.9M58.0 442.9L-9.9 446.5M-9.9 446.5L-81.2 450.4M1041.4 433.0L1092.0 443.2M354.8 432.1L298.3 435.3M298.3 435.3L239.2 438.6M239.2 438.6L177.4 442.1M177.4 442.1L112.6 445.8M112.6 445.8L44.6 449.6M1016.5 435.0L1066.0 445.5M465.2 431.4L411.3 434.6M411.3 434.6L355.0 437.9M355.0 437.9L296.0 441.4M296.0 441.4L234.3 445.0M234.3 445.0L169.5 448.8M948.9 427.6L990.9 437.0M990.9 437.0L1039.1 447.8M574.8 430.8L523.5 433.9M523.5 433.9L469.9 437.2M469.9 437.2L413.8 440.6M413.8 440.6L355.1 444.2M355.1 444.2L293.5 448.0M923.8 429.4L964.5 439.0M964.5 439.0L1011.5 450.1M635.0 433.2L584.1 436.5M584.1 436.5L530.8 439.9M530.8 439.9L475.1 443.4M475.1 443.4L416.6 447.2M898.0 431.2L937.5 441.1M937.5 441.1L983.1 452.6M745.7 432.5L697.5 435.8M697.5 435.8L647.0 439.1M647.0 439.1L594.2 442.7M594.2 442.7L538.8 446.4M538.8 446.4L480.7 450.3M871.6 433.1L909.7 443.3M855.7 431.9L810.1 435.1M810.1 435.1L762.4 438.4M762.4 438.4L712.5 441.9M712.5 441.9L660.1 445.6M660.1 445.6L605.2 449.4M844.4 435.0L881.0 445.5M965.0 431.2L922.0 434.4M922.0 434.4L877.0 437.7M877.0 437.7L829.9 441.2M829.9 441.2L780.6 444.8M780.6 444.8L728.8 448.6M786.1 427.7L816.5 437.0M816.5 437.0L851.6 447.8M1073.6 430.5L1033.2 433.7M1033.2 433.7L990.9 437.0M990.9 437.0L946.6 440.4M946.6 440.4L900.2 444.0M900.2 444.0L851.6 447.8M758.9 429.5L787.9 439.1M787.9 439.1L821.2 450.2M1143.6 433.0L1103.9 436.2M1103.9 436.2L1062.4 439.7M1062.4 439.7L1019.0 443.2M1019.0 443.2L973.4 447.0M731.1 431.3L758.4 441.2M758.4 441.2L790.0 452.6M1177.5 438.9L1136.9 442.5M1136.9 442.5L1094.4 446.2M702.4 433.2L728.1 443.3M673.1 435.1L696.9 445.6M623.9 427.7L642.9 437.1M642.9 437.1L664.8 447.9M594.7 429.5L611.9 439.1M611.9 439.1L631.7 450.2M564.7 431.4L580.0 441.2M580.0 441.2L597.7 452.7M533.9 433.3L547.2 443.4M502.3 435.2L513.5 445.6M462.2 427.8L469.9 437.2M469.9 437.2L478.7 447.9M431.0 429.6L436.6 439.2M436.6 439.2L443.0 450.3M398.9 431.4L402.3 441.3M402.3 441.3L406.2 452.7M366.0 433.3L367.1 443.5M332.3 435.3L330.8 445.7M301.1 427.9L297.6 437.2M297.6 437.2L293.5 448.0M267.9 429.7L261.9 439.3M261.9 439.3L255.1 450.3M233.8 431.5L225.3 441.4M225.3 441.4L215.5 452.8M198.8 433.4L187.6 443.5M187.6 443.5L174.8 455.2M162.8 435.3L148.9 445.7M125.9 437.3L109.0 448.0M105.4 429.8L88.0 439.3M88.0 439.3L68.0 450.4M69.3 431.6L49.0 441.4M49.0 441.4L25.7 452.8M32.2 433.5L8.9 443.6M8.9 443.6L-17.9 455.3M-5.9 435.4L-32.3 445.8M-45.1 437.4L-74.7 448.1M-85.2 439.4L-118.4 450.4M-126.6 441.5L-163.4 452.8M-169.0 443.7L-209.7 455.3" stroke="#a8a8a8" stroke-width="1" fill="none" opacity="0.85" stroke-linecap="butt"/><path d="M1227.5 447.7L1299.2 460.3M1299.2 460.3L1383.8 475.1M1383.8 475.1L1484.9 492.9M1484.9 492.9L1608.0 514.5M1608.0 514.5L1761.1 541.4M1761.1 541.4L1956.8 575.7M1956.8 575.7L2215.5 621.1M2215.5 621.1L2573.7 683.9M2573.7 683.9L3102.4 776.7M3102.4 776.7L3961.2 927.4M3961.2 927.4L5600.0 1215.0M5600.0 1215.0L9964.9 1981.0M9964.9 1981.0L27607.7 5077.0M1202.6 450.1L1273.5 463.1M1273.5 463.1L1357.2 478.4M1357.2 478.4L1457.6 496.8M1457.6 496.8L1580.3 519.3M1580.3 519.3L1733.7 547.5M1733.7 547.5L1930.9 583.6M1930.9 583.6L2193.7 631.8M2193.7 631.8L2561.4 699.3M2561.4 699.3L3112.7 800.4M3112.7 800.4L4030.5 968.7M4030.5 968.7L5862.5 1304.7M5862.5 1304.7L11330.0 2307.5M11330.0 2307.5L26443.7 5079.4M-207.9 451.2L-286.2 455.3M1177.0 452.5L1246.9 465.9M1246.9 465.9L1329.6 481.8M1329.6 481.8L1429.2 501.0M1429.2 501.0L1551.4 524.4M1551.4 524.4L1705.0 553.9M1705.0 553.9L1903.5 592.1M1903.5 592.1L2170.4 643.3M2170.4 643.3L2548.1 715.9M2548.1 715.9L3124.0 826.5M3124.0 826.5L4109.3 1015.7M4109.3 1015.7L6181.3 1413.6M6181.3 1413.6L13348.0 2790.1M13348.0 2790.1L25279.8 5081.7M-81.2 450.4L-156.0 454.5M-156.0 454.5L-234.7 458.8M-234.7 458.8L-317.5 463.3M1092.0 443.2L1150.6 455.0M1150.6 455.0L1219.4 468.9M1219.4 468.9L1301.0 485.4M1301.0 485.4L1399.7 505.2M1399.7 505.2L1521.2 529.7M1521.2 529.7L1674.7 560.7M1674.7 560.7L1874.5 601.0M1874.5 601.0L2145.5 655.6M2145.5 655.6L2533.8 733.8M2533.8 733.8L3136.6 855.3M3136.6 855.3L4199.9 1069.7M4199.9 1069.7L6576.6 1548.7M6576.6 1548.7L16634.1 3576.0M16634.1 3576.0L24115.8 5084.0M44.6 449.6L-26.8 453.6M-26.8 453.6L-101.8 457.9M-101.8 457.9L-180.8 462.3M-180.8 462.3L-264.1 467.0M-264.1 467.0L-352.1 472.0M1066.0 445.5L1123.4 457.6M1123.4 457.6L1190.9 472.0M1190.9 472.0L1271.4 489.0M1271.4 489.0L1368.9 509.7M1368.9 509.7L1489.6 535.3M1489.6 535.3L1642.9 567.8M1642.9 567.8L1843.8 610.4M1843.8 610.4L2118.8 668.7M2118.8 668.7L2518.1 753.4M2518.1 753.4L3150.6 887.5M3150.6 887.5L4304.9 1132.3M4304.9 1132.3L7079.9 1720.7M7079.9 1720.7L22931.5 5082.1M22931.5 5082.1L22951.9 5086.4M169.5 448.8L101.5 452.8M101.5 452.8L30.0 457.0M30.0 457.0L-45.2 461.4M-45.2 461.4L-124.5 466.1M-124.5 466.1L-208.2 471.0M-208.2 471.0L-296.7 476.2M-296.7 476.2L-390.4 481.7M1039.1 447.8L1095.3 460.3M1095.3 460.3L1161.5 475.1M1161.5 475.1L1240.6 492.8M1240.6 492.8L1336.9 514.4M1336.9 514.4L1456.6 541.1M1456.6 541.1L1609.3 575.3M1609.3 575.3L1811.1 620.4M1811.1 620.4L2090.1 682.8M2090.1 682.8L2501.0 774.7M2501.0 774.7L3166.3 923.5M3166.3 923.5L4428.3 1205.8M4428.3 1205.8L7742.4 1947.1M7742.4 1947.1L21788.0 5088.7M293.5 448.0L228.8 451.9M228.8 451.9L160.9 456.1M160.9 456.1L89.4 460.5M89.4 460.5L14.0 465.1M14.0 465.1L-65.5 470.0M-65.5 470.0L-149.6 475.1M-149.6 475.1L-238.6 480.6M-238.6 480.6L-332.9 486.3M-332.9 486.3L-433.2 492.5M1011.5 450.1L1066.3 463.1M1066.3 463.1L1131.0 478.4M1131.0 478.4L1208.7 496.8M1208.7 496.8L1303.5 519.2M1303.5 519.2L1421.9 547.2M1421.9 547.2L1573.9 583.2M1573.9 583.2L1776.4 631.1M1776.4 631.1L2059.2 698.0M2059.2 698.0L2482.2 798.1M2482.2 798.1L3184.0 964.2M3184.0 964.2L4575.3 1293.4M4575.3 1293.4L8653.7 2258.5M8653.7 2258.5L20624.0 5091.1M416.6 447.2L355.2 451.1M355.2 451.1L290.7 455.2M290.7 455.2L222.9 459.6M222.9 459.6L151.4 464.1M151.4 464.1L76.0 469.0M76.0 469.0L-3.7 474.1M-3.7 474.1L-88.1 479.5M-88.1 479.5L-177.5 485.2M-177.5 485.2L-272.4 491.2M-272.4 491.2L-373.4 497.7M-373.4 497.7L-481.1 504.6M983.1 452.6L1036.4 466.0M1036.4 466.0L1099.5 481.8M1099.5 481.8L1175.4 500.9M1175.4 500.9L1268.6 524.3M1268.6 524.3L1385.5 553.6M1385.5 553.6L1536.5 591.6M1536.5 591.6L1739.3 642.5M1739.3 642.5L2025.8 714.5M2025.8 714.5L2461.6 823.9M2461.6 823.9L3204.1 1010.4M3204.1 1010.4L4753.3 1399.5M4753.3 1399.5L9986.5 2713.9M9986.5 2713.9L19460.1 5093.4M480.7 450.3L419.6 454.4M419.6 454.4L355.4 458.7M355.4 458.7L287.7 463.2M287.7 463.2L216.3 468.0M216.3 468.0L140.9 473.0M140.9 473.0L61.1 478.4M61.1 478.4L-23.4 484.0M-23.4 484.0L-113.2 490.0M-113.2 490.0L-208.7 496.4M-208.7 496.4L-310.4 503.2M-310.4 503.2L-419.0 510.5M-419.0 510.5L-535.3 518.3M909.7 443.3L953.8 455.1M953.8 455.1L1005.4 468.9M1005.4 468.9L1066.8 485.3M1066.8 485.3L1140.9 505.2M1140.9 505.2L1232.1 529.6M1232.1 529.6L1347.2 560.4M1347.2 560.4L1496.9 600.4M1496.9 600.4L1699.6 654.7M1699.6 654.7L1989.7 732.3M1989.7 732.3L2438.7 852.5M2438.7 852.5L3227.2 1063.4M3227.2 1063.4L4973.3 1530.7M4973.3 1530.7L12121.0 3443.3M12121.0 3443.3L18296.2 5095.8M605.2 449.4L547.5 453.5M547.5 453.5L486.8 457.8M486.8 457.8L422.9 462.2M422.9 462.2L355.5 467.0M355.5 467.0L284.4 472.0M284.4 472.0L209.1 477.3M209.1 477.3L129.3 482.9M129.3 482.9L44.6 488.8M44.6 488.8L-45.4 495.1M-45.4 495.1L-141.3 501.9M-141.3 501.9L-243.7 509.1M-243.7 509.1L-353.3 516.8M-353.3 516.8L-470.7 525.0M-470.7 525.0L-597.1 533.9M881.0 445.5L923.5 457.7M923.5 457.7L973.4 472.0M973.4 472.0L1032.9 489.0M1032.9 489.0L1104.9 509.6M1104.9 509.6L1193.9 535.1M1193.9 535.1L1306.9 567.4M1306.9 567.4L1454.9 609.8M1454.9 609.8L1657.2 667.7M1657.2 667.7L1950.3 751.7M1950.3 751.7L2413.3 884.2M2413.3 884.2L3253.9 1124.9M3253.9 1124.9L5252.4 1697.0M5252.4 1697.0L16091.9 4800.3M16091.9 4800.3L17132.2 5098.1M728.8 448.6L674.5 452.6M674.5 452.6L617.3 456.9M617.3 456.9L557.1 461.3M557.1 461.3L493.6 466.0M493.6 466.0L426.6 471.0M426.6 471.0L355.7 476.2M355.7 476.2L280.7 481.7M280.7 481.7L201.0 487.6M201.0 487.6L116.3 493.9M116.3 493.9L26.1 500.5M26.1 500.5L-70.1 507.6M-70.1 507.6L-173.1 515.3M-173.1 515.3L-283.4 523.4M-283.4 523.4L-402.1 532.2M-402.1 532.2L-529.9 541.6M-529.9 541.6L-668.0 551.8M851.6 447.8L892.3 460.4M892.3 460.4L940.3 475.1M940.3 475.1L997.6 492.8M997.6 492.8L1067.4 514.2M1067.4 514.2L1154.0 540.9M1154.0 540.9L1264.5 574.9M1264.5 574.9L1410.3 619.8M1410.3 619.8L1611.6 681.7M1611.6 681.7L1907.4 772.8M1907.4 772.8L2384.9 919.7M2384.9 919.7L3285.3 1196.9M3285.3 1196.9L5617.6 1914.7M5617.6 1914.7L15968.3 5100.4M851.6 447.8L800.5 451.8M800.5 451.8L746.8 456.0M746.8 456.0L690.2 460.4M690.2 460.4L630.6 465.0M630.6 465.0L567.7 469.9M567.7 469.9L501.1 475.1M501.1 475.1L430.7 480.6M430.7 480.6L355.9 486.4M355.9 486.4L276.5 492.6M276.5 492.6L191.9 499.2M191.9 499.2L101.7 506.2M101.7 506.2L5.2 513.8M5.2 513.8L-98.1 521.8M-98.1 521.8L-209.2 530.5M-209.2 530.5L-328.9 539.8M-328.9 539.8L-458.1 549.9M-458.1 549.9L-598.2 560.8M-598.2 560.8L-750.5 572.6M821.2 450.2L860.1 463.1M860.1 463.1L906.0 478.4M906.0 478.4L961.1 496.7M961.1 496.7L1028.3 519.1M1028.3 519.1L1112.1 547.0M1112.1 547.0L1219.7 582.8M1219.7 582.8L1362.8 630.4M1362.8 630.4L1562.5 696.8M1562.5 696.8L1860.4 795.9M1860.4 795.9L2352.8 959.8M2352.8 959.8L3322.5 1282.4M3322.5 1282.4L6116.6 2212.1M6116.6 2212.1L14804.3 5102.8M973.4 447.0L925.5 451.0M925.5 451.0L875.2 455.1M875.2 455.1L822.3 459.5M822.3 459.5L766.5 464.1M766.5 464.1L707.6 468.9M707.6 468.9L645.3 474.1M645.3 474.1L579.4 479.5M579.4 479.5L509.5 485.3M509.5 485.3L435.2 491.4M435.2 491.4L356.2 497.9M356.2 497.9L271.9 504.9M271.9 504.9L181.7 512.3M181.7 512.3L85.2 520.2M85.2 520.2L-18.5 528.8M-18.5 528.8L-130.1 538.0M-130.1 538.0L-250.7 547.9M-250.7 547.9L-381.3 558.7M-381.3 558.7L-523.2 570.4M-523.2 570.4L-678.0 583.2M-678.0 583.2L-847.4 597.1M790.0 452.6L826.8 466.0M826.8 466.0L870.5 481.8M870.5 481.8L923.1 500.8M923.1 500.8L987.4 524.1M987.4 524.1L1068.2 553.4M1068.2 553.4L1172.5 591.1M1172.5 591.1L1312.2 641.7M1312.2 641.7L1509.5 713.1M1509.5 713.1L1808.6 821.4M1808.6 821.4L2316.4 1005.3M2316.4 1005.3L3367.5 1385.8M3367.5 1385.8L6838.9 2642.7M6838.9 2642.7L13640.4 5105.1M1094.4 446.2L1049.7 450.1M1049.7 450.1L1002.7 454.2M1002.7 454.2L953.3 458.6M953.3 458.6L901.3 463.1M901.3 463.1L846.3 467.9M846.3 467.9L788.3 473.0M788.3 473.0L726.8 478.4M726.8 478.4L661.7 484.1M661.7 484.1L592.5 490.2M592.5 490.2L518.8 496.6M518.8 496.6L440.3 503.5M440.3 503.5L356.4 510.8M356.4 510.8L266.6 518.7M266.6 518.7L170.1 527.1M170.1 527.1L66.3 536.2M66.3 536.2L-45.7 546.0M-45.7 546.0L-167.0 556.7M-167.0 556.7L-298.8 568.2M-298.8 568.2L-442.4 580.8M-442.4 580.8L-599.6 594.5M-599.6 594.5L-772.4 609.7M-772.4 609.7L-963.1 626.4M728.1 443.3L757.7 455.1M757.7 455.1L792.5 468.9M792.5 468.9L833.7 485.3M833.7 485.3L883.5 505.1M883.5 505.1L944.8 529.4M944.8 529.4L1022.0 560.1M1022.0 560.1L1122.4 599.9M1122.4 599.9L1258.2 653.8M1258.2 653.8L1452.0 730.8M1452.0 730.8L1751.4 849.6M1751.4 849.6L2274.6 1057.3M2274.6 1057.3L3423.0 1513.2M3423.0 1513.2L7978.0 3321.6M7978.0 3321.6L12476.5 5107.5M1214.4 445.4L1172.9 449.3M1172.9 449.3L1129.3 453.4M1129.3 453.4L1083.4 457.7M1083.4 457.7L1035.0 462.2M1035.0 462.2L984.0 466.9M984.0 466.9L930.0 472.0M930.0 472.0L873.0 477.3M873.0 477.3L812.5 482.9M812.5 482.9L748.3 488.9M748.3 488.9L680.0 495.3M680.0 495.3L607.1 502.1M607.1 502.1L529.3 509.4M529.3 509.4L446.1 517.1M446.1 517.1L356.7 525.5M356.7 525.5L260.6 534.5M260.6 534.5L156.9 544.2M156.9 544.2L44.6 554.6M44.6 554.6L-77.3 566.0M-77.3 566.0L-210.0 578.4M-210.0 578.4L-355.2 592.0M-355.2 592.0L-514.7 606.8M-514.7 606.8L-690.7 623.3M-690.7 623.3L-885.8 641.5M-885.8 641.5L-1103.4 661.8M696.9 445.6L724.5 457.7M724.5 457.7L756.9 472.0M756.9 472.0L795.6 488.9M795.6 488.9L842.4 509.5M842.4 509.5L900.2 534.9M900.2 534.9L973.5 567.1M973.5 567.1L1069.4 609.2M1069.4 609.2L1200.2 666.7M1200.2 666.7L1389.6 749.9M1389.6 749.9L1687.7 880.9M1687.7 880.9L2226.4 1117.6M2226.4 1117.6L3493.0 1674.1M3493.0 1674.1L10040.6 4551.0M10040.6 4551.0L11312.5 5109.8M1254.9 452.5L1212.4 456.8M1212.4 456.8L1167.6 461.2M1167.6 461.2L1120.5 465.9M1120.5 465.9L1070.6 470.9M1070.6 470.9L1017.9 476.2M1017.9 476.2L962.0 481.8M962.0 481.8L902.6 487.7M902.6 487.7L839.6 494.0M839.6 494.0L772.3 500.8M772.3 500.8L700.5 507.9M700.5 507.9L623.7 515.6M623.7 515.6L541.3 523.9M541.3 523.9L452.6 532.7M452.6 532.7L357.1 542.3M357.1 542.3L253.7 552.6M253.7 552.6L141.5 563.9M141.5 563.9L19.3 576.1M19.3 576.1L-114.2 589.4M-114.2 589.4L-260.8 604.1M-260.8 604.1L-422.4 620.2M-422.4 620.2L-601.4 638.1M-601.4 638.1L-801.0 658.1M-801.0 658.1L-1024.7 680.5M-1024.7 680.5L-1277.3 705.7M664.8 447.9L690.2 460.4M690.2 460.4L720.2 475.1M720.2 475.1L756.0 492.7M756.0 492.7L799.5 514.1M799.5 514.1L853.5 540.7M853.5 540.7L922.3 574.5M922.3 574.5L1013.0 619.1M1013.0 619.1L1138.1 680.6M1138.1 680.6L1321.5 770.9M1321.5 770.9L1616.6 916.0M1616.6 916.0L2169.9 1188.1M2169.9 1188.1L3584.3 1883.7M3584.3 1883.7L10148.6 5112.2M1299.2 460.3L1255.8 465.0M1255.8 465.0L1210.0 469.9M1210.0 469.9L1161.5 475.1M1161.5 475.1L1110.1 480.7M1110.1 480.7L1055.6 486.5M1055.6 486.5L997.6 492.8M997.6 492.8L935.9 499.4M935.9 499.4L870.0 506.5M870.0 506.5L799.5 514.1M799.5 514.1L723.9 522.3M723.9 522.3L642.6 531.0M642.6 531.0L554.9 540.5M554.9 540.5L460.2 550.7M460.2 550.7L357.4 561.7M357.4 561.7L245.6 573.8M245.6 573.8L123.5 586.9M123.5 586.9L-10.5 601.4M-10.5 601.4L-158.2 617.2M-158.2 617.2L-321.6 634.9M-321.6 634.9L-503.6 654.5M-503.6 654.5L-707.5 676.4M-707.5 676.4L-937.4 701.2M-937.4 701.2L-1198.7 729.3M-1198.7 729.3L-1498.3 761.6M631.7 450.2L654.8 463.1M654.8 463.1L682.1 478.4M682.1 478.4L714.8 496.7M714.8 496.7L754.8 518.9M754.8 518.9L804.5 546.7M804.5 546.7L868.3 582.4M868.3 582.4L953.1 629.7M953.1 629.7L1071.1 695.6M1071.1 695.6L1246.9 793.8M1246.9 793.8L1536.4 955.4M1536.4 955.4L2102.9 1271.7M2102.9 1271.7L3708.0 2168.1M3708.0 2168.1L8984.6 5114.5M1348.2 468.9L1303.9 474.1M1303.9 474.1L1257.0 479.5M1257.0 479.5L1207.2 485.3M1207.2 485.3L1154.3 491.5M1154.3 491.5L1097.9 498.1M1097.9 498.1L1037.8 505.1M1037.8 505.1L973.4 512.6M973.4 512.6L904.5 520.7M904.5 520.7L830.4 529.3M830.4 529.3L750.5 538.6M750.5 538.6L664.3 548.7M664.3 548.7L570.7 559.6M570.7 559.6L469.0 571.5M469.0 571.5L357.9 584.5M357.9 584.5L236.1 598.7M236.1 598.7L102.1 614.3M102.1 614.3L-46.2 631.6M-46.2 631.6L-211.2 650.9M-211.2 650.9L-395.9 672.4M-395.9 672.4L-603.9 696.7M-603.9 696.7L-840.0 724.2M-840.0 724.2L-1110.4 755.8M-1110.4 755.8L-1423.0 792.3M-1423.0 792.3L-1788.6 834.9M597.7 452.7L618.3 466.0M618.3 466.0L642.7 481.8M642.7 481.8L672.1 500.7M672.1 500.7L708.1 524.0M708.1 524.0L753.2 553.1M753.2 553.1L811.3 590.6M811.3 590.6L889.2 640.9M889.2 640.9L998.9 711.8M998.9 711.8L1164.9 819.0M1164.9 819.0L1445.6 1000.2M1445.6 1000.2L2022.2 1372.5M2022.2 1372.5L3885.5 2575.8M3885.5 2575.8L7820.7 5116.8M1402.6 478.4L1357.4 484.2M1357.4 484.2L1309.4 490.3M1309.4 490.3L1258.3 496.8M1258.3 496.8L1203.9 503.7M1203.9 503.7L1145.6 511.1M1145.6 511.1L1083.2 519.1M1083.2 519.1L1016.1 527.6M1016.1 527.6L943.9 536.8M943.9 536.8L865.9 546.8M865.9 546.8L781.3 557.5M781.3 557.5L689.4 569.2M689.4 569.2L589.2 582.0M589.2 582.0L479.3 596.0M479.3 596.0L358.4 611.4M358.4 611.4L224.8 628.4M224.8 628.4L76.3 647.3M76.3 647.3L-89.8 668.5M-89.8 668.5L-276.6 692.3M-276.6 692.3L-488.5 719.3M-488.5 719.3L-730.8 750.1M-730.8 750.1L-1010.5 785.8M-1010.5 785.8L-1337.0 827.3M-1337.0 827.3L-1723.2 876.5M-1723.2 876.5L-2187.1 935.6M547.2 443.4L562.6 455.2M562.6 455.2L580.5 468.9M580.5 468.9L601.9 485.3M601.9 485.3L627.6 505.0M627.6 505.0L659.3 529.2M659.3 529.2L699.2 559.7M699.2 559.7L751.0 599.4M751.0 599.4L821.0 652.9M821.0 652.9L920.7 729.2M920.7 729.2L1074.3 846.8M1074.3 846.8L1341.6 1051.4M1341.6 1051.4L1923.0 1496.4M1923.0 1496.4L4161.4 3209.4M4161.4 3209.4L6656.8 5119.2M1463.1 489.1L1417.3 495.5M1417.3 495.5L1368.3 502.4M1368.3 502.4L1316.0 509.7M1316.0 509.7L1260.0 517.5M1260.0 517.5L1199.8 526.0M1199.8 526.0L1135.0 535.1M1135.0 535.1L1065.1 544.9M1065.1 544.9L989.4 555.5M989.4 555.5L907.1 567.0M907.1 567.0L817.3 579.6M817.3 579.6L719.0 593.4M719.0 593.4L611.0 608.5M611.0 608.5L491.6 625.3M491.6 625.3L359.1 643.9M359.1 643.9L211.0 664.6M211.0 664.6L44.6 688.0M44.6 688.0L-143.9 714.4M-143.9 714.4L-359.2 744.6M-359.2 744.6L-607.4 779.4M-607.4 779.4L-896.5 819.9M-896.5 819.9L-1237.8 867.8M-1237.8 867.8L-1646.8 925.1M-1646.8 925.1L-2145.7 995.1M-2145.7 995.1L-2767.8 1082.3M513.5 445.6L526.4 457.8M526.4 457.8L541.5 472.0M541.5 472.0L559.5 488.9M559.5 488.9L581.4 509.4M581.4 509.4L608.3 534.7M608.3 534.7L642.4 566.8M642.4 566.8L687.1 608.7M687.1 608.7L747.9 665.8M747.9 665.8L835.7 748.2M835.7 748.2L973.6 877.7M973.6 877.7L1221.5 1110.5M1221.5 1110.5L1798.3 1652.1M1798.3 1652.1L4648.7 4328.8M4648.7 4328.8L5492.8 5121.5M1531.2 501.0L1484.7 508.2M1484.7 508.2L1434.9 516.0M1434.9 516.0L1381.5 524.3M1381.5 524.3L1324.0 533.3M1324.0 533.3L1262.0 543.0M1262.0 543.0L1194.8 553.5M1194.8 553.5L1121.9 564.8M1121.9 564.8L1042.4 577.2M1042.4 577.2L955.4 590.8M955.4 590.8L859.9 605.7M859.9 605.7L754.3 622.2M754.3 622.2L637.3 640.5M637.3 640.5L506.6 660.8M506.6 660.8L359.9 683.7M359.9 683.7L193.9 709.6M193.9 709.6L4.6 739.2M4.6 739.2L-213.3 773.2M-213.3 773.2L-466.8 812.7M-466.8 812.7L-765.3 859.3M-765.3 859.3L-1122.2 915.0M-1122.2 915.0L-1556.3 982.7M-1556.3 982.7L-2095.7 1066.9M-2095.7 1066.9L-2784.0 1174.2M-2784.0 1174.2L-3692.9 1316.1M478.7 447.9L489.0 460.4M489.0 460.4L501.1 475.1M501.1 475.1L515.6 492.7M515.6 492.7L533.2 514.0M533.2 514.0L554.9 540.5M554.9 540.5L582.7 574.1M582.7 574.1L619.2 618.5M619.2 618.5L669.5 679.6M669.5 679.6L743.1 769.0M743.1 769.0L861.1 912.3M861.1 912.3L1081.2 1179.6M1081.2 1179.6L1636.5 1854.0M1636.5 1854.0L4328.9 5123.9M1608.0 514.5L1561.2 522.7M1561.2 522.7L1510.9 531.6M1510.9 531.6L1456.6 541.1M1456.6 541.1L1397.8 551.5M1397.8 551.5L1334.0 562.7M1334.0 562.7L1264.5 574.9M1264.5 574.9L1188.5 588.3M1188.5 588.3L1105.1 603.0M1105.1 603.0L1013.0 619.1M1013.0 619.1L911.0 637.1M911.0 637.1L797.2 657.1M797.2 657.1L669.5 679.6M669.5 679.6L525.2 704.9M525.2 704.9L360.9 733.9M360.9 733.9L172.0 767.1M172.0 767.1L-47.3 805.7M-47.3 805.7L-305.1 851.0M-305.1 851.0L-612.6 905.1M-612.6 905.1L-985.6 970.7M-985.6 970.7L-1447.4 1051.9M-1447.4 1051.9L-2034.2 1155.1M-2034.2 1155.1L-2804.6 1290.7M-2804.6 1290.7L-3860.8 1476.4M-3860.8 1476.4L-5397.9 1746.8M443.0 450.3L450.5 463.2M450.5 463.2L459.4 478.4M459.4 478.4L470.0 496.6M470.0 496.6L482.9 518.8M482.9 518.8L499.0 546.5M499.0 546.5L519.6 581.9M519.6 581.9L547.0 629.0M547.0 629.0L585.1 694.4M585.1 694.4L641.7 791.6M641.7 791.6L734.6 951.2M734.6 951.2L915.1 1261.3M915.1 1261.3L1418.6 2126.2M1418.6 2126.2L3165.0 5126.2M1695.6 529.9L1648.9 539.3M1648.9 539.3L1598.3 549.5M1598.3 549.5L1543.4 560.6M1543.4 560.6L1483.7 572.6M1483.7 572.6L1418.4 585.8M1418.4 585.8L1346.7 600.2M1346.7 600.2L1267.7 616.1M1267.7 616.1L1180.2 633.8M1180.2 633.8L1082.8 653.4M1082.8 653.4L973.5 675.5M973.5 675.5L850.2 700.4M850.2 700.4L709.9 728.6M709.9 728.6L548.9 761.1M548.9 761.1L362.2 798.8M362.2 798.8L143.2 842.9M143.2 842.9L-117.4 895.5M-117.4 895.5L-432.7 959.1M-432.7 959.1L-821.7 1037.5M-821.7 1037.5L-1314.0 1136.8M-1314.0 1136.8L-1956.7 1266.4M-1956.7 1266.4L-2831.5 1442.8M-2831.5 1442.8L-4091.5 1697.0M-4091.5 1697.0L-6063.4 2094.6M-6063.4 2094.6L-9587.5 2805.3M406.2 452.7L410.7 466.0M410.7 466.0L416.1 481.7M416.1 481.7L422.5 500.7M422.5 500.7L430.4 523.8M430.4 523.8L440.3 552.8M440.3 552.8L453.1 590.2M453.1 590.2L470.1 640.1M470.1 640.1L494.1 710.4M494.1 710.4L530.3 816.5M530.3 816.5L591.2 995.2M591.2 995.2L715.5 1359.6M715.5 1359.6L1108.9 2512.9M1108.9 2512.9L2001.0 5128.6M1796.4 547.5L1750.2 558.4M1750.2 558.4L1700.0 570.3M1700.0 570.3L1645.1 583.3M1645.1 583.3L1584.9 597.5M1584.9 597.5L1518.6 613.2M1518.6 613.2L1445.2 630.5M1445.2 630.5L1363.6 649.8M1363.6 649.8L1272.1 671.5M1272.1 671.5L1169.0 695.8M1169.0 695.8L1051.8 723.5M1051.8 723.5L917.5 755.3M917.5 755.3L762.1 792.0M762.1 792.0L580.1 835.1M580.1 835.1L364.0 886.2M364.0 886.2L103.2 947.8M103.2 947.8L-217.5 1023.6M-217.5 1023.6L-621.6 1119.2M-621.6 1119.2L-1146.5 1243.3M-1146.5 1243.3L-1856.0 1411.0M-1856.0 1411.0L-2868.1 1650.3M-2868.1 1650.3L-4428.8 2019.2M-4428.8 2019.2L-7150.1 2662.6M-7150.1 2662.6L-13092.9 4067.5M-13092.9 4067.5L-17749.4 5168.3M367.1 443.5L368.2 455.2M368.2 455.2L369.6 468.9M369.6 468.9L371.2 485.2M371.2 485.2L373.2 504.9M373.2 504.9L375.6 529.0M375.6 529.0L378.7 559.4M378.7 559.4L382.6 598.9M382.6 598.9L388.0 652.1M388.0 652.1L395.6 727.8M395.6 727.8L407.2 844.0M407.2 844.0L427.4 1045.5M427.4 1045.5L471.0 1480.0M471.0 1480.0L634.0 3105.7M634.0 3105.7L837.1 5130.9M1913.4 568.1L1868.7 580.9M1868.7 580.9L1819.7 594.9M1819.7 594.9L1765.7 610.3M1765.7 610.3L1706.1 627.3M1706.1 627.3L1639.7 646.3M1639.7 646.3L1565.4 667.5M1565.4 667.5L1481.8 691.4M1481.8 691.4L1386.9 718.6M1386.9 718.6L1278.3 749.6M1278.3 749.6L1152.7 785.5M1152.7 785.5L1006.0 827.4M1006.0 827.4L832.1 877.1M832.1 877.1L623.0 936.9M623.0 936.9L366.4 1010.2M366.4 1010.2L44.5 1102.2M44.5 1102.2L-371.6 1221.1M-371.6 1221.1L-930.3 1380.8M-930.3 1380.8L-1719.9 1606.4M-1719.9 1606.4L-2921.0 1949.7M-2921.0 1949.7L-4968.4 2534.8M-4968.4 2534.8L-9243.2 3756.4M-9243.2 3756.4L-14158.3 5161.1M330.8 445.7L329.1 457.8M329.1 457.8L327.1 472.0M327.1 472.0L324.8 488.9M324.8 488.9L321.9 509.3M321.9 509.3L318.3 534.5M318.3 534.5L313.9 566.4M313.9 566.4L308.0 608.1M308.0 608.1L300.1 664.8M300.1 664.8L288.6 746.6M288.6 746.6L270.6 874.6M270.6 874.6L238.5 1103.6M238.5 1103.6L164.5 1630.9M164.5 1630.9L-186.0 4129.6M-186.0 4129.6L-326.9 5133.2M2051.2 592.2L2009.2 607.4M2009.2 607.4L1962.8 624.2M1962.8 624.2L1911.2 642.8M1911.2 642.8L1853.6 663.7M1853.6 663.7L1788.8 687.1M1788.8 687.1L1715.3 713.7M1715.3 713.7L1631.3 744.0M1631.3 744.0L1534.4 779.1M1534.4 779.1L1421.3 819.9M1421.3 819.9L1287.6 868.3M1287.6 868.3L1127.2 926.3M1127.2 926.3L931.0 997.2M931.0 997.2L685.7 1085.9M685.7 1085.9L370.2 1199.9M370.2 1199.9L-50.6 1352.0M-50.6 1352.0L-640.3 1565.2M-640.3 1565.2L-1525.7 1885.3M-1525.7 1885.3L-3004.0 2419.7M-3004.0 2419.7L-5970.1 3492.0M-5970.1 3492.0L-10567.2 5153.9M293.5 448.0L288.8 460.4M288.8 460.4L283.2 475.1M283.2 475.1L276.5 492.6M276.5 492.6L268.4 513.9M268.4 513.9L258.4 540.2M258.4 540.2L245.6 573.8M245.6 573.8L228.8 617.9M228.8 617.9L205.8 678.5M205.8 678.5L172.0 767.1M172.0 767.1L118.1 908.7M118.1 908.7L18.2 1171.2M18.2 1171.2L-230.9 1825.6M-230.9 1825.6L-1490.8 5135.6M2215.5 621.1L2178.3 639.4M2178.3 639.4L2136.8 659.8M2136.8 659.8L2090.1 682.8M2090.1 682.8L2037.3 708.9M2037.3 708.9L1976.9 738.6M1976.9 738.6L1907.4 772.8M1907.4 772.8L1826.4 812.6M1826.4 812.6L1730.9 859.7M1730.9 859.7L1616.6 916.0M1616.6 916.0L1477.2 984.6M1477.2 984.6L1303.5 1070.1M1303.5 1070.1L1081.2 1179.6M1081.2 1179.6L786.4 1324.7M786.4 1324.7L376.8 1526.4M376.8 1526.4L-230.9 1825.6M-230.9 1825.6L-1226.1 2315.6M-1226.1 2315.6L-3153.2 3264.4M-3153.2 3264.4L-6976.1 5146.6M255.1 450.3L247.1 463.2M247.1 463.2L237.7 478.4M237.7 478.4L226.4 496.5M226.4 496.5L212.7 518.7M212.7 518.7L195.6 546.2M195.6 546.2L173.7 581.5M173.7 581.5L144.6 628.3M144.6 628.3L104.3 693.2M104.3 693.2L44.6 789.5M44.6 789.5L-53.2 947.0M-53.2 947.0L-242.0 1251.2M-242.0 1251.2L-760.4 2086.3M-760.4 2086.3L-2654.7 5137.9M2415.1 656.1L2385.9 678.7M2385.9 678.7L2352.9 704.1M2352.9 704.1L2315.3 733.2M2315.3 733.2L2272.1 766.7M2272.1 766.7L2221.8 805.5M2221.8 805.5L2162.6 851.3M2162.6 851.3L2091.8 906.0M2091.8 906.0L2005.8 972.4M2005.8 972.4L1899.1 1054.9M1899.1 1054.9L1763.1 1160.1M1763.1 1160.1L1583.8 1298.7M1583.8 1298.7L1336.6 1489.8M1336.6 1489.8L974.0 1770.0M974.0 1770.0L390.7 2220.9M390.7 2220.9L-703.2 3066.4M-703.2 3066.4L-3385.0 5139.4M215.5 452.8L204.1 466.0M204.1 466.0L190.6 481.7M190.6 481.7L174.4 500.6M174.4 500.6L154.5 523.7M154.5 523.7L129.7 552.5M129.7 552.5L97.7 589.7M97.7 589.7L54.9 639.4M54.9 639.4L-5.1 709.1M-5.1 709.1L-95.5 814.1M-95.5 814.1L-247.1 990.3M-247.1 990.3L-554.2 1347.1M-554.2 1347.1L-1506.5 2453.6M-1506.5 2453.6L-3818.7 5140.3M2662.5 699.5L2646.8 728.0M2646.8 728.0L2628.7 760.7M2628.7 760.7L2607.6 798.6M2607.6 798.6L2582.9 843.2M2582.9 843.2L2553.5 896.3M2553.5 896.3L2517.8 960.7M2517.8 960.7L2473.7 1040.3M2473.7 1040.3L2417.7 1141.4M2417.7 1141.4L2344.3 1273.9M2344.3 1273.9L2243.8 1455.1M2243.8 1455.1L2098.0 1718.2M2098.0 1718.2L1867.4 2134.4M1867.4 2134.4L1447.1 2892.7M1447.1 2892.7L440.6 4708.9M440.6 4708.9L206.1 5132.2M174.8 455.2L159.7 469.0M159.7 469.0L141.8 485.2M141.8 485.2L120.2 504.8M120.2 504.8L93.8 528.9M93.8 528.9L60.5 559.1M60.5 559.1L17.3 598.4M17.3 598.4L-40.9 651.2M-40.9 651.2L-123.5 726.3M-123.5 726.3L-250.0 841.3M-250.0 841.3L-468.4 1039.8M-468.4 1039.8L-935.3 1464.2M-935.3 1464.2L-2635.8 3009.6M-2635.8 3009.6L-4982.6 5142.6M2977.4 754.8L2984.4 791.8M2984.4 791.8L2992.5 835.2M2992.5 835.2L3002.2 886.8M3002.2 886.8L3013.9 949.2M3013.9 949.2L3028.3 1026.2M3028.3 1026.2L3046.6 1123.4M3046.6 1123.4L3070.3 1250.2M3070.3 1250.2L3102.6 1422.3M3102.6 1422.3L3149.0 1669.7M3149.0 1669.7L3221.3 2055.1M3221.3 2055.1L3349.6 2739.0M3349.6 2739.0L3640.0 4287.2M3640.0 4287.2L3797.1 5124.9M148.9 445.7L132.7 457.8M132.7 457.8L113.7 472.0M113.7 472.0L91.2 488.8M91.2 488.8L63.9 509.2M63.9 509.2L30.2 534.3M30.2 534.3L-12.3 566.1M-12.3 566.1L-67.8 607.5M-67.8 607.5L-143.3 663.9M-143.3 663.9L-251.9 744.9M-251.9 744.9L-421.4 871.5M-421.4 871.5L-723.3 1096.8M-723.3 1096.8L-1411.4 1610.4M-1411.4 1610.4L-4545.7 3950.0M-4545.7 3950.0L-6146.5 5145.0M3391.7 827.5L3438.5 877.7M3438.5 877.7L3494.8 938.2M3494.8 938.2L3564.1 1012.5M3564.1 1012.5L3651.3 1106.1M3651.3 1106.1L3764.3 1227.5M3764.3 1227.5L3916.9 1391.3M3916.9 1391.3L4133.9 1624.2M4133.9 1624.2L4467.3 1982.1M4467.3 1982.1L5044.8 2602.0M5044.8 2602.0L6289.3 3938.1M6289.3 3938.1L7388.2 5117.7M109.0 448.0L89.4 460.5M89.4 460.5L66.3 475.1M66.3 475.1L38.7 492.6M38.7 492.6L5.2 513.8M5.2 513.8L-36.2 540.0M-36.2 540.0L-88.9 573.4M-88.9 573.4L-158.2 617.2M-158.2 617.2L-253.2 677.5M-253.2 677.5L-391.8 765.2M-391.8 765.2L-612.6 905.1M-612.6 905.1L-1020.0 1163.1M-1020.0 1163.1L-2022.8 1798.3M-2022.8 1798.3L-7310.5 5147.3M3961.2 927.4L4081.9 999.3M4081.9 999.3L4233.1 1089.5M4233.1 1089.5L4428.3 1205.8M4428.3 1205.8L4689.9 1361.8M4689.9 1361.8L5058.7 1581.6M5058.7 1581.6L5617.6 1914.7M5617.6 1914.7L6564.7 2479.2M6564.7 2479.2L8519.2 3644.2M8519.2 3644.2L10979.3 5110.5M68.0 450.4L44.6 463.2M44.6 463.2L17.1 478.4M17.1 478.4L-15.8 496.5M-15.8 496.5L-55.9 518.5M-55.9 518.5L-105.8 546.0M-105.8 546.0L-169.7 581.1M-169.7 581.1L-254.2 627.6M-254.2 627.6L-371.4 692.1M-371.4 692.1L-544.7 787.4M-544.7 787.4L-827.2 942.8M-827.2 942.8L-1369.8 1241.3M-1369.8 1241.3L-2836.8 2048.3M-2836.8 2048.3L-8474.4 5149.7M4793.4 1073.5L5064.2 1185.1M5064.2 1185.1L5424.8 1333.7M5424.8 1333.7L5928.8 1541.4M5928.8 1541.4L6683.0 1852.3M6683.0 1852.3L7935.3 2368.5M7935.3 2368.5L10422.0 3393.4M10422.0 3393.4L14570.4 5103.3M25.7 452.8L-1.6 466.0M-1.6 466.0L-33.8 481.7M-33.8 481.7L-72.4 500.5M-72.4 500.5L-119.7 523.5M-119.7 523.5L-178.8 552.2M-178.8 552.2L-254.9 589.2M-254.9 589.2L-356.4 638.6M-356.4 638.6L-498.7 707.8M-498.7 707.8L-712.5 811.8M-712.5 811.8L-1069.9 985.5M-1069.9 985.5L-1788.3 1334.9M-1788.3 1334.9L-3974.2 2397.7M-3974.2 2397.7L-9638.4 5152.0M6124.2 1307.0L6748.8 1503.6M6748.8 1503.6L7672.5 1794.4M7672.5 1794.4L9177.5 2268.1M9177.5 2268.1L12064.7 3176.9M12064.7 3176.9L18161.5 5096.0M-17.9 455.3L-49.3 469.0M-49.3 469.0L-86.5 485.2M-86.5 485.2L-131.3 504.7M-131.3 504.7L-186.3 528.7M-186.3 528.7L-255.5 558.8M-255.5 558.8L-345.1 597.8M-345.1 597.8L-465.6 650.4M-465.6 650.4L-636.5 724.8M-636.5 724.8L-897.7 838.6M-897.7 838.6L-1346.4 1034.2M-1346.4 1034.2L-2298.1 1448.8M-2298.1 1448.8L-5675.2 2920.3M-5675.2 2920.3L-10802.3 5154.3M8593.9 1740.4L10308.6 2176.7M10308.6 2176.7L13497.2 2988.1M13497.2 2988.1L21493.2 5022.8M21493.2 5022.8L21752.6 5088.8M-32.3 445.8L-62.8 457.9M-62.8 457.9L-98.6 472.0M-98.6 472.0L-141.2 488.8M-141.2 488.8L-192.6 509.1M-192.6 509.1L-256.0 534.1M-256.0 534.1L-336.1 565.7M-336.1 565.7L-440.5 607.0M-440.5 607.0L-582.3 662.9M-582.3 662.9L-785.9 743.3M-785.9 743.3L-1102.8 868.4M-1102.8 868.4L-1664.5 1090.1M-1664.5 1090.1L-2932.6 1590.7M-2932.6 1590.7L-8496.9 3787.2M-8496.9 3787.2L-11966.2 5156.7M14757.5 2822.0L22801.1 4538.9M22801.1 4538.9L25343.7 5081.6M-74.7 448.1L-109.1 460.5M-109.1 460.5L-149.6 475.1M-149.6 475.1L-197.9 492.5M-197.9 492.5L-256.4 513.6M-256.4 513.6L-328.9 539.8M-328.9 539.8L-420.9 573.0M-420.9 573.0L-541.8 616.6M-541.8 616.6L-707.5 676.4M-707.5 676.4L-948.5 763.4M-948.5 763.4L-1331.5 901.6M-1331.5 901.6L-2034.2 1155.1M-2034.2 1155.1L-3743.8 1772.0M-3743.8 1772.0L-13130.2 5159.0M-118.4 450.4L-156.9 463.2M-156.9 463.2L-202.4 478.3M-202.4 478.3L-256.7 496.4M-256.7 496.4L-322.9 518.4M-322.9 518.4L-405.2 545.7M-405.2 545.7L-510.4 580.7M-510.4 580.7L-649.4 626.9M-649.4 626.9L-842.0 690.9M-842.0 690.9L-1126.2 785.3M-1126.2 785.3L-1587.9 938.8M-1587.9 938.8L-2469.2 1231.7M-2469.2 1231.7L-4817.6 2012.1M-4817.6 2012.1L-14294.1 5161.4M-163.4 452.8L-206.3 466.1M-206.3 466.1L-257.0 481.7M-257.0 481.7L-317.9 500.4M-317.9 500.4L-392.3 523.3M-392.3 523.3L-485.2 552.0M-485.2 552.0L-604.7 588.8M-604.7 588.8L-764.0 637.8M-764.0 637.8L-986.9 706.5M-986.9 706.5L-1321.1 809.4M-1321.1 809.4L-1877.5 980.8M-1877.5 980.8L-2988.5 1323.0M-2988.5 1323.0L-6306.3 2344.9M-6306.3 2344.9L-15458.1 5163.7M-209.7 455.3L-257.3 469.0M-257.3 469.0L-313.6 485.2M-313.6 485.2L-381.5 504.6M-381.5 504.6L-464.7 528.5M-464.7 528.5L-569.2 558.5M-569.2 558.5L-704.5 597.3M-704.5 597.3L-886.3 649.5M-886.3 649.5L-1143.6 723.4M-1143.6 723.4L-1535.9 836.0M-1535.9 836.0L-2207.2 1028.7M-2207.2 1028.7L-3619.3 1434.0M-3619.3 1434.0L-8507.7 2837.1M-8507.7 2837.1L-16622.0 5166.1M-212.7 445.9L-257.5 457.9M-257.5 457.9L-309.9 472.0M-309.9 472.0L-372.3 488.7M-372.3 488.7L-447.6 509.0M-447.6 509.0L-540.4 533.9M-540.4 533.9L-657.6 565.4M-657.6 565.4L-810.1 606.4M-810.1 606.4L-1017.0 662.0M-1017.0 662.0L-1313.5 741.7M-1313.5 741.7L-1773.8 865.4M-1773.8 865.4L-2585.9 1083.6M-2585.9 1083.6L-4401.7 1571.6M-4401.7 1571.6L-12094.7 3639.0M-12094.7 3639.0L-17785.9 5168.4M-257.7 448.1L-306.7 460.5M-306.7 460.5L-364.4 475.1M-364.4 475.1L-433.2 492.5M-433.2 492.5L-516.5 513.5M-516.5 513.5L-619.6 539.6M-619.6 539.6L-750.5 572.6M-750.5 572.6L-922.1 616.0M-922.1 616.0L-1157.1 675.4M-1157.1 675.4L-1498.3 761.6M-1498.3 761.6L-2038.7 898.1M-2038.7 898.1L-3025.3 1147.4M-3025.3 1147.4L-5397.9 1746.8M-5397.9 1746.8L-18949.9 5170.7" stroke="#a8a8a8" stroke-width="1" fill="none" opacity="0.95" stroke-linecap="butt"/><defs>
<linearGradient id="logH" x1="0" y1="0" x2="1" y2="0">
 <stop offset="0" stop-color="#211b19"/><stop offset="0.15" stop-color="#342c29"/><stop offset="0.5" stop-color="#443a36"/><stop offset="0.85" stop-color="#342b28"/><stop offset="1" stop-color="#1f1917"/>
</linearGradient>
<pattern id="logsF" patternUnits="userSpaceOnUse" x="942" y="0" width="33" height="1000"><rect width="33" height="1000" fill="url(#logH)"/></pattern>
<pattern id="logsS" patternUnits="userSpaceOnUse" x="900" y="0" width="8" height="1000"><rect width="8" height="1000" fill="url(#logH)"/></pattern>
<pattern id="logsL" patternUnits="userSpaceOnUse" x="960" y="0" width="10" height="1000"><rect width="10" height="1000" fill="url(#logH)"/></pattern>
<linearGradient id="logV" x1="0" y1="0" x2="0" y2="1">
 <stop offset="0" stop-color="#2a221e"/><stop offset="0.3" stop-color="#43372f"/><stop offset="0.7" stop-color="#3d322b"/><stop offset="1" stop-color="#241d1a"/>
</linearGradient>
<pattern id="logsG" patternUnits="userSpaceOnUse" x="0" y="277" width="2000" height="23.5"><rect width="2000" height="23.5" fill="url(#logV)"/></pattern>
<linearGradient id="pil" x1="0" y1="0" x2="1" y2="0">
 <stop offset="0" stop-color="#28201d"/><stop offset="0.4" stop-color="#433732"/><stop offset="1" stop-color="#2a221f"/>
</linearGradient>
<linearGradient id="roofL" x1="0" y1="0" x2="1" y2="1">
 <stop offset="0" stop-color="#3a2f2a"/><stop offset="1" stop-color="#3e332d"/>
</linearGradient>
</defs><g transform="translate(-448,-91)"><g id="bld"><polygon points="900,440 914,438 914,680 917,700 917,709 897,709 897,700 900,680" fill="url(#pil)"/><rect x="897" y="690" width="21" height="4" fill="#7f6f52"/><rect x="897" y="700" width="21" height="4" fill="#7f6f52"/><rect x="896" y="555" width="22" height="3" fill="#776850"/><rect x="896" y="565" width="22" height="3" fill="#776850"/><polygon points="900,443 953,434 953,624 900,566" fill="url(#logsS)"/><polygon points="900,560 953,616 953,628 900,572" fill="#2f2622"/><polygon points="953,432 1234,428 1234,606 953,630" fill="url(#logsF)"/><polygon points="958,638 1010,633 1010,812 986,796 958,730" fill="url(#logsL)"/><polygon points="955,718 960,716 990,790 986,796" fill="#241d1a"/><polygon points="1008,634 1172,616 1172,795 1010,815" fill="url(#logsF)"/><polygon points="958,627 1211,603 1234,601 1234,617 1172,622 958,643" fill="#3a2f2a"/><polygon points="958,627 1234,601 1234,604 958,630" fill="#4b3e36"/><polygon points="1055,672 1126,665 1126,801 1055,810" fill="#1e1a18"/><polygon points="1096,668 1126,665 1126,801 1096,772" fill="#2d2622"/><path d="M1097 680 L1125 677" stroke="#1d1815" stroke-width="2"/><path d="M1097 698 L1125 695" stroke="#1d1815" stroke-width="2"/><path d="M1097 716 L1125 713" stroke="#1d1815" stroke-width="2"/><path d="M1097 734 L1125 731" stroke="#1d1815" stroke-width="2"/><path d="M1097 752 L1125 749" stroke="#1d1815" stroke-width="2"/><path d="M1097 770 L1125 767" stroke="#1d1815" stroke-width="2"/><polygon points="1058,752 1096,748 1126,801 1058,810" fill="#2a2522"/><polygon points="1036,652 1056,650 1057,817 1037,818" fill="url(#pil)"/><polygon points="1126,663 1146,661 1146,801 1126,803" fill="url(#pil)"/><polygon points="1030,652 1151,638 1151,660 1030,675" fill="#3b302a"/><polygon points="1030,652 1151,638 1151,642 1030,656" fill="#4c3f37"/><polygon points="1008,812 1172,792 1172,800 1008,820" fill="#2b231f"/><polygon points="936,432 958,432 958,794 962,826 962,834 932,834 932,826 936,794" fill="url(#pil)"/><rect x="934.5" y="620" width="25.0" height="3" fill="#7a6a4e"/><rect x="934.5" y="630" width="25.0" height="3" fill="#7a6a4e"/><rect x="934.5" y="646" width="25.0" height="3" fill="#7a6a4e"/><rect x="934.5" y="781" width="25.0" height="3" fill="#7a6a4e"/><rect x="932" y="815" width="30" height="3" fill="#7a6a4e"/><rect x="932" y="824" width="30" height="3" fill="#7a6a4e"/><polygon points="986,640 1007,640 1007,785 1011,817 1011,825 982,825 982,817 986,785" fill="url(#pil)"/><rect x="984.5" y="643" width="24.0" height="3" fill="#7a6a4e"/><rect x="982" y="810" width="29" height="3" fill="#7a6a4e"/><rect x="982" y="818" width="29" height="3" fill="#7a6a4e"/><polygon points="1171,606 1188,606 1188,753 1192,785 1192,793 1167,793 1167,785 1171,753" fill="url(#pil)"/><rect x="1169.5" y="617" width="20.0" height="3" fill="#7a6a4e"/><rect x="1169.5" y="742" width="20.0" height="3" fill="#7a6a4e"/><rect x="1167" y="771" width="25" height="3" fill="#7a6a4e"/><rect x="1167" y="782" width="25" height="3" fill="#7a6a4e"/><polygon points="1210,430 1228,430 1228,746 1233,778 1233,786 1205,786 1205,778 1210,746" fill="url(#pil)"/><rect x="1208.5" y="588" width="21.0" height="3" fill="#7a6a4e"/><rect x="1208.5" y="600" width="21.0" height="3" fill="#7a6a4e"/><rect x="1208.5" y="617" width="21.0" height="3" fill="#7a6a4e"/><rect x="1208.5" y="734" width="21.0" height="3" fill="#7a6a4e"/><rect x="1205" y="761" width="28" height="3" fill="#7a6a4e"/><rect x="1205" y="776" width="28" height="3" fill="#7a6a4e"/><polygon points="1104,272 1000,425 1226,425" fill="url(#logsG)"/><polygon points="1000,420 1242,420 1242,433 953,436" fill="#2f2622"/><clipPath id="slabclip"><polygon points="992,249 1000,247 1020,248 1040,238 1064,222 1080,200 1080,190 1101,175 1101,228 1124,230 1105,276 1080,318 1050,371 1030,402 1007,421 961,424 894,440 862,424 857,404 892,396 925,385 953,366 972,338 986,304 992,279"/></clipPath><polygon points="992,249 1000,247 1020,248 1040,238 1064,222 1080,200 1080,190 1101,175 1101,228 1124,230 1105,276 1080,318 1050,371 1030,402 1007,421 961,424 894,440 862,424 857,404 892,396 925,385 953,366 972,338 986,304 992,279" fill="#352d2a"/><path d="M1073.6,219.4 L1033.6,244.4 L1003.6,266.4 L995.6,283.4 L989.6,308.4 L975.6,342.4 L956.6,370.4 L928.6,389.4 L895.6,400.4 L853.6,410.4" fill="none" stroke="#29221f" stroke-width="1.6" clip-path="url(#slabclip)" stroke-linejoin="round"/><path d="M1077.2,223.8 L1037.2,248.8 L1007.2,270.8 L999.2,287.8 L993.2,312.8 L979.2,346.8 L960.2,374.8 L932.2,393.8 L899.2,404.8 L857.2,414.8" fill="none" stroke="#3c3330" stroke-width="1.6" clip-path="url(#slabclip)" stroke-linejoin="round"/><path d="M1080.8,228.2 L1040.8,253.2 L1010.8,275.2 L1002.8,292.2 L996.8,317.2 L982.8,351.2 L963.8,379.2 L935.8,398.2 L902.8,409.2 L860.8,419.2" fill="none" stroke="#29221f" stroke-width="1.6" clip-path="url(#slabclip)" stroke-linejoin="round"/><path d="M1084.4,232.6 L1044.4,257.6 L1014.4,279.6 L1006.4,296.6 L1000.4,321.6 L986.4,355.6 L967.4,383.6 L939.4,402.6 L906.4,413.6 L864.4,423.6" fill="none" stroke="#3c3330" stroke-width="1.6" clip-path="url(#slabclip)" stroke-linejoin="round"/><path d="M1088.0,237.0 L1048.0,262.0 L1018.0,284.0 L1010.0,301.0 L1004.0,326.0 L990.0,360.0 L971.0,388.0 L943.0,407.0 L910.0,418.0 L868.0,428.0" fill="none" stroke="#29221f" stroke-width="1.6" clip-path="url(#slabclip)" stroke-linejoin="round"/><path d="M1091.6,241.4 L1051.6,266.4 L1021.6,288.4 L1013.6,305.4 L1007.6,330.4 L993.6,364.4 L974.6,392.4 L946.6,411.4 L913.6,422.4 L871.6,432.4" fill="none" stroke="#3c3330" stroke-width="1.6" clip-path="url(#slabclip)" stroke-linejoin="round"/><path d="M1095.2,245.8 L1055.2,270.8 L1025.2,292.8 L1017.2,309.8 L1011.2,334.8 L997.2,368.8 L978.2,396.8 L950.2,415.8 L917.2,426.8 L875.2,436.8" fill="none" stroke="#29221f" stroke-width="1.6" clip-path="url(#slabclip)" stroke-linejoin="round"/><path d="M1098.8,250.2 L1058.8,275.2 L1028.8,297.2 L1020.8,314.2 L1014.8,339.2 L1000.8,373.2 L981.8,401.2 L953.8,420.2 L920.8,431.2 L878.8,441.2" fill="none" stroke="#3c3330" stroke-width="1.6" clip-path="url(#slabclip)" stroke-linejoin="round"/><path d="M1102.4,254.6 L1062.4,279.6 L1032.4,301.6 L1024.4,318.6 L1018.4,343.6 L1004.4,377.6 L985.4,405.6 L957.4,424.6 L924.4,435.6 L882.4,445.6" fill="none" stroke="#29221f" stroke-width="1.6" clip-path="url(#slabclip)" stroke-linejoin="round"/><path d="M1106.0,259.0 L1066.0,284.0 L1036.0,306.0 L1028.0,323.0 L1022.0,348.0 L1008.0,382.0 L989.0,410.0 L961.0,429.0 L928.0,440.0 L886.0,450.0" fill="none" stroke="#3c3330" stroke-width="1.6" clip-path="url(#slabclip)" stroke-linejoin="round"/><path d="M1109.6,263.4 L1069.6,288.4 L1039.6,310.4 L1031.6,327.4 L1025.6,352.4 L1011.6,386.4 L992.6,414.4 L964.6,433.4 L931.6,444.4 L889.6,454.4" fill="none" stroke="#29221f" stroke-width="1.6" clip-path="url(#slabclip)" stroke-linejoin="round"/><path d="M1113.2,267.8 L1073.2,292.8 L1043.2,314.8 L1035.2,331.8 L1029.2,356.8 L1015.2,390.8 L996.2,418.8 L968.2,437.8 L935.2,448.8 L893.2,458.8" fill="none" stroke="#3c3330" stroke-width="1.6" clip-path="url(#slabclip)" stroke-linejoin="round"/><path d="M1116.8,272.2 L1076.8,297.2 L1046.8,319.2 L1038.8,336.2 L1032.8,361.2 L1018.8,395.2 L999.8,423.2 L971.8,442.2 L938.8,453.2 L896.8,463.2" fill="none" stroke="#29221f" stroke-width="1.6" clip-path="url(#slabclip)" stroke-linejoin="round"/><path d="M1120.4,276.6 L1080.4,301.6 L1050.4,323.6 L1042.4,340.6 L1036.4,365.6 L1022.4,399.6 L1003.4,427.6 L975.4,446.6 L942.4,457.6 L900.4,467.6" fill="none" stroke="#3c3330" stroke-width="1.6" clip-path="url(#slabclip)" stroke-linejoin="round"/><path d="M1124.0,281.0 L1084.0,306.0 L1054.0,328.0 L1046.0,345.0 L1040.0,370.0 L1026.0,404.0 L1007.0,432.0 L979.0,451.0 L946.0,462.0 L904.0,472.0" fill="none" stroke="#29221f" stroke-width="1.6" clip-path="url(#slabclip)" stroke-linejoin="round"/><path d="M1127.6,285.4 L1087.6,310.4 L1057.6,332.4 L1049.6,349.4 L1043.6,374.4 L1029.6,408.4 L1010.6,436.4 L982.6,455.4 L949.6,466.4 L907.6,476.4" fill="none" stroke="#3c3330" stroke-width="1.6" clip-path="url(#slabclip)" stroke-linejoin="round"/><path d="M862,420 C 930,398 990,365 1030,300" fill="none" stroke="#3f3632" stroke-width="5" opacity="0.5" clip-path="url(#slabclip)"/><polygon points="992,249 1000,247 1020,248 1040,238 1064,222 1080,200 1080,190 1100,175 1100,227 1076,242 1040,261 1003,277 992,280" fill="#2c2421"/><polygon points="1003,277 1040,261 1076,242 1078,236 1040,255 1002,271" fill="#241d1a"/><polygon points="1000,246 1020,247 1020,251 1001,251" fill="#8f7d5c"/><rect x="1000" y="247" width="2" height="31" fill="#7d6d52"/><polygon points="857,404 864,403 870,428 862,424" fill="#8e7d5b"/><polygon points="866,408 874,407 879,432 871,429" fill="#8e7d5b"/><path d="M1120,229 C 1130,300 1160,370 1286,409 L1282,435 C 1200,420 1140,380 1103,279 Z" fill="#372e2a" stroke="#372e2a" stroke-width="1.2"/><path d="M1128,250 C 1138,315 1170,375 1284,418" fill="none" stroke="#463a34" stroke-width="4" opacity="0.7"/><polygon points="1080,191 1101,175 1101,228 1090,230" fill="#2c2420"/><polygon points="1101,175 1128,177 1129,227 1101,228" fill="#a08c65"/><polygon points="1106,182 1124,184 1124,220 1106,221" fill="#8f7c58" opacity="0.6"/><rect x="1074" y="330" width="16" height="10" fill="#9a8760" transform="rotate(-55 1082 335)"/><rect x="1038" y="372" width="16" height="10" fill="#9a8760" transform="rotate(-40 1046 377)"/><rect x="983" y="408" width="16" height="10" fill="#9a8760" transform="rotate(-22 991 413)"/><rect x="1124" y="330" width="16" height="10" fill="#9a8760" transform="rotate(55 1132 335)"/><rect x="1160" y="372" width="16" height="10" fill="#9a8760" transform="rotate(40 1168 377)"/><rect x="1206" y="405" width="16" height="10" fill="#9a8760" transform="rotate(25 1214 410)"/><rect x="1216" y="429" width="26" height="6" fill="#8b7a58"/><rect x="926" y="436" width="24" height="5" fill="#8b7a58"/></g></g></svg>
<div class="a" style="left:448px;top:91px;width:1194px;height:1px;background:#3c3c3c;"></div>
<div class="a" style="left:1642px;top:33px;width:4px;height:1001px;background:#ffffff;"></div>
<div class="a" style="left:448px;top:902px;width:1194px;height:21px;background:#6a6a6a;"></div>
<div class="a t" style="left:452.50px;top:907px;color:#d2d2cc;font-size:12px;font-weight:700;letter-spacing:0.667px;-webkit-text-stroke:0;">Motions</div>
<div class="a" style="left:448px;top:923px;width:1194px;height:112px;background:#ffffff;box-sizing:border-box;border:1px solid #9c9c9c;border-top:none"></div>
<div class="a" style="left:1646px;top:34px;width:269px;height:21px;background:#6a6a6a;"></div>
<div class="a t" style="left:1650.40px;top:39px;color:#d2d2cc;font-size:12px;font-weight:700;letter-spacing:0.655px;-webkit-text-stroke:0;">Rendering Stamp Settings</div>
<div class="a" style="left:1647px;top:55px;width:268px;height:21px;background:#c18f00;"></div>
<div class="a t" style="left:1652.40px;top:59px;color:#f8f0dc;font-size:12px;font-weight:400;letter-spacing:1.761px;">Name</div>
<div class="a" style="left:1647px;top:76px;width:268px;height:21px;background:#f6efd5;box-sizing:border-box;border:1px solid #c8c8c8;border-top:none;border-bottom:2px solid #a8a8a8"></div>
<div class="a t" style="left:1650.40px;top:80px;color:#000;font-size:12px;font-weight:400;letter-spacing:1.198px;">chalet-building-08</div>
<svg class="a" style="left:1899px;top:79px;" width="14" height="14" viewBox="0 0 14 14"><path d="M3 9L9 3L12 6L6 12L2 13Z" fill="#8c8c8c"/><path d="M10 2L11 1L14 4L13 5Z" fill="#8c8c8c"/></svg>
<div class="a" style="left:1647px;top:96px;width:251px;height:938px;background:#f6efd5;"></div>
<div class="a" style="left:1898px;top:96px;width:17px;height:938px;background:#f0f0f0;"></div>
<div class="a" style="left:1906px;top:113px;width:2px;height:554px;background:#7a7a7a;"></div>
<div class="a" style="left:1647px;top:97px;width:251px;height:33px;background:#f6efd5;box-sizing:border-box;border-left:1px solid #b4b4b4;border-right:1px solid #b4b4b4"></div>
<div class="a" style="left:1649px;top:99px;width:247px;height:29px;background:#c18f00;"></div>
<svg class="a" style="left:1653px;top:107px;" width="13" height="13" viewBox="0 0 13 13"><circle cx="6.5" cy="6.5" r="6" fill="#f8f0dc"/><path d="M3.5 5.5L6.5 8.5L9.5 5.5" fill="none" stroke="#c18f00" stroke-width="2"/></svg>
<div class="a t" style="left:1670.50px;top:107px;color:#f8f0dc;font-size:12px;font-weight:400;letter-spacing:0.864px;">Basic</div>
<div class="a" style="left:1647px;top:130px;width:251px;height:21px;background:#e8e8e8;box-sizing:border-box;border:1px solid #b4b4b4"></div>
<div class="a" style="left:1746px;top:130px;width:1px;height:21px;background:#b4b4b4;"></div>
<div class="a t" style="left:1650.40px;top:136px;color:#a4a4a4;font-size:12px;font-weight:400;letter-spacing:1.066px;">Graphic Name</div>
<div class="a t" style="left:1750.60px;top:136px;color:#a4a4a4;font-size:12px;font-weight:400;letter-spacing:1.169px;">chalet-building-08</div>
<div class="a" style="left:1647px;top:150px;width:251px;height:134px;background:#f6efd5;box-sizing:border-box;border:1px solid #b4b4b4"></div>
<div class="a" style="left:1746px;top:150px;width:1px;height:134px;background:#b4b4b4;"></div>
<div class="a t" style="left:1650.40px;top:212px;color:#000;font-size:12px;font-weight:400;letter-spacing:0.928px;">Graphic</div>
<svg class="a" style="left:1747px;top:153px;" width="128" height="128" viewBox="0 0 128 128"><rect x="0" y="0" width="128" height="128" fill="#4d4d4d"/><polygon points="36,62 52,75 55,117 36,101" fill="#45372f"/><polygon points="52,75 92,68 92,109 55,118" fill="#503f36"/><path d="M56.0 75.0V116.0" stroke="#3a2d27" stroke-width="1.2"/><path d="M60.8 74.2V115.0" stroke="#3a2d27" stroke-width="1.2"/><path d="M65.6 73.3V114.0" stroke="#3a2d27" stroke-width="1.2"/><path d="M70.4 72.5V113.0" stroke="#3a2d27" stroke-width="1.2"/><path d="M75.2 71.6V112.0" stroke="#3a2d27" stroke-width="1.2"/><path d="M80.0 70.8V111.0" stroke="#3a2d27" stroke-width="1.2"/><path d="M84.8 69.9V110.0" stroke="#3a2d27" stroke-width="1.2"/><path d="M89.6 69.0V109.0" stroke="#3a2d27" stroke-width="1.2"/><polygon points="30,55 50,25 76,42 98,63 84,67 52,77" fill="#55443b"/><path d="M33,58.5 Q44,34 53.5,27.8" fill="none" stroke="#44362f" stroke-width="1.3"/><path d="M36,62.0 Q48,36 57.0,30.6" fill="none" stroke="#44362f" stroke-width="1.3"/><path d="M39,65.5 Q52,38 60.5,33.4" fill="none" stroke="#44362f" stroke-width="1.3"/><path d="M42,69.0 Q56,40 64.0,36.2" fill="none" stroke="#44362f" stroke-width="1.3"/><path d="M45,72.5 Q60,42 67.5,39.0" fill="none" stroke="#44362f" stroke-width="1.3"/><path d="M48,76.0 Q64,44 71.0,41.8" fill="none" stroke="#44362f" stroke-width="1.3"/><polygon points="50,25 76,42 98,63 92,64 72,47" fill="#46382f"/><path d="M30 55L52 77" stroke="#b09a70" stroke-width="1.3"/><rect x="69" y="97" width="7" height="14" fill="#1b1614"/><rect x="50" y="25" width="2" height="1.5" fill="#b09a70"/><rect x="72" y="46" width="2" height="1.5" fill="#b09a70"/><rect x="82" y="53" width="2" height="1.5" fill="#b09a70"/><rect x="92" y="64" width="2" height="1.5" fill="#b09a70"/><rect x="61" y="71" width="2" height="1.5" fill="#b09a70"/><rect x="70" y="70" width="2" height="1.5" fill="#b09a70"/><rect x="85" y="68" width="2" height="1.5" fill="#b09a70"/><rect x="38" y="80" width="2" height="1.5" fill="#b09a70"/><rect x="38" y="98" width="2" height="1.5" fill="#b09a70"/><rect x="56" y="102" width="2" height="1.5" fill="#b09a70"/><rect x="62" y="110" width="2" height="1.5" fill="#b09a70"/><rect x="90" y="90" width="2" height="1.5" fill="#b09a70"/><rect x="88" y="106" width="2" height="1.5" fill="#b09a70"/><rect x="76" y="82" width="2" height="1.5" fill="#b09a70"/></svg>
<svg class="a" style="left:1868px;top:236px;" width="28" height="28" viewBox="0 0 28 28"><rect x="0" y="0" width="28" height="28" fill="#fff"/><g transform="translate(-1,-1) scale(0.85)"><path d="M8 8L12 4L23 4L23 19L18.5 23.5L8 23.5L8 18L4.5 18L4.5 12.5L8 11Z" fill="#5c5c5c"/><path d="M10 10L17 10L17 21.5L10 21.5L10 16L6.5 16L6.5 14L10 12.5Z" fill="#fff"/><path d="M10.8 7.8L13 5.8L20.5 5.8L18.3 7.8Z" fill="#fff"/><rect x="12.5" y="12" width="2" height="2" fill="#5c5c5c"/><path d="M11 18.2Q13.5 20 16 17.8" stroke="#5c5c5c" stroke-width="1.4" fill="none"/></g><path d="M24.5 15V22.5H16M18.5 20L16 22.5L18.5 25" fill="none" stroke="#5c5c5c" stroke-width="2"/></svg>
<svg class="a" style="left:1883px;top:269px;" width="13" height="11" viewBox="0 0 13 11"><path d="M1 5.5H11M7 1.5L11 5.5L7 9.5" fill="none" stroke="#9a9a9a" stroke-width="1.6"/></svg>
<div class="a" style="left:1647px;top:283px;width:251px;height:21px;background:#f6efd5;box-sizing:border-box;border:1px solid #b4b4b4"></div>
<div class="a" style="left:1746px;top:283px;width:1px;height:21px;background:#b4b4b4;"></div>
<div class="a t" style="left:1650.40px;top:289px;color:#000;font-size:12px;font-weight:400;letter-spacing:1.109px;">Subgraphic</div>
<svg class="a" style="left:1751px;top:286px;" width="32" height="15" viewBox="0 0 32 15"><rect x="0" y="0" width="32" height="15" rx="7.5" fill="#636363"/><circle cx="7.5" cy="7.5" r="6" fill="#d2d2d2"/></svg>
<div class="a" style="left:1647px;top:303px;width:251px;height:21px;background:#f6efd5;box-sizing:border-box;border:1px solid #b4b4b4"></div>
<div class="a" style="left:1746px;top:303px;width:1px;height:21px;background:#b4b4b4;"></div>
<div class="a t" style="left:1650.40px;top:309px;color:#000;font-size:12px;font-weight:400;letter-spacing:1.178px;">Accurate C...</div>
<svg class="a" style="left:1751px;top:306px;" width="32" height="15" viewBox="0 0 32 15"><rect x="0" y="0" width="32" height="15" rx="7.5" fill="#636363"/><circle cx="7.5" cy="7.5" r="6" fill="#d2d2d2"/></svg>
<div class="a" style="left:1647px;top:323px;width:251px;height:21px;background:#f6efd5;box-sizing:border-box;border:1px solid #b4b4b4"></div>
<div class="a" style="left:1746px;top:323px;width:1px;height:21px;background:#b4b4b4;"></div>
<div class="a t" style="left:1650.40px;top:329px;color:#000;font-size:12px;font-weight:400;letter-spacing:1.250px;">Overwrite N...</div>
<svg class="a" style="left:1751px;top:326px;" width="32" height="15" viewBox="0 0 32 15"><rect x="0" y="0" width="32" height="15" rx="7.5" fill="#636363"/><circle cx="24.5" cy="7.5" r="6" fill="#fff"/><rect x="24" y="5" width="1.4" height="5" fill="#333"/></svg>
<div class="a" style="left:1647px;top:343px;width:251px;height:21px;background:#f6efd5;box-sizing:border-box;border:1px solid #b4b4b4"></div>
<div class="a" style="left:1746px;top:343px;width:1px;height:21px;background:#b4b4b4;"></div>
<div class="a t" style="left:1650.40px;top:349px;color:#000;font-size:12px;font-weight:400;letter-spacing:0.926px;">Billboarding</div>
<svg class="a" style="left:1751px;top:346px;" width="32" height="15" viewBox="0 0 32 15"><rect x="0" y="0" width="32" height="15" rx="7.5" fill="#636363"/><circle cx="7.5" cy="7.5" r="6" fill="#d2d2d2"/></svg>
<div class="a" style="left:1647px;top:364px;width:251px;height:33px;background:#f6efd5;box-sizing:border-box;border-left:1px solid #b4b4b4;border-right:1px solid #b4b4b4"></div>
<div class="a" style="left:1649px;top:366px;width:247px;height:29px;background:#c18f00;"></div>
<svg class="a" style="left:1653px;top:374px;" width="13" height="13" viewBox="0 0 13 13"><circle cx="6.5" cy="6.5" r="6" fill="#f8f0dc"/><path d="M3.5 5.5L6.5 8.5L9.5 5.5" fill="none" stroke="#c18f00" stroke-width="2"/></svg>
<div class="a t" style="left:1670.50px;top:374px;color:#f8f0dc;font-size:12px;font-weight:400;letter-spacing:0.810px;">Simple Collision Settings</div>
<div class="a" style="left:1647px;top:397px;width:251px;height:21px;background:#f6efd5;box-sizing:border-box;border:1px solid #b4b4b4"></div>
<div class="a" style="left:1746px;top:397px;width:1px;height:21px;background:#b4b4b4;"></div>
<div class="a t" style="left:1650.40px;top:403px;color:#000;font-size:12px;font-weight:400;letter-spacing:1.224px;">Shape</div>
<div class="a t" style="left:1750.60px;top:403px;color:#000;font-size:12px;font-weight:400;letter-spacing:0.885px;">Mesh</div>
<svg class="a" style="left:1881px;top:401px;" width="15" height="14" viewBox="0 0 15 14"><rect x="0" y="0" width="15" height="14" rx="1.5" fill="#a6a6a6"/><path d="M2 3L7.5 9L13 3" fill="#f4f4f4"/></svg>
<div class="a" style="left:1647px;top:417px;width:251px;height:21px;background:#f6efd5;box-sizing:border-box;border:1px solid #b4b4b4"></div>
<div class="a" style="left:1746px;top:417px;width:1px;height:21px;background:#b4b4b4;"></div>
<div class="a t" style="left:1650.40px;top:423px;color:#000;font-size:12px;font-weight:400;letter-spacing:0.830px;">Capsule Axis</div>
<div class="a t" style="left:1750.60px;top:423px;color:#000;font-size:12px;font-weight:400;letter-spacing:-0.616px;">Y</div>
<svg class="a" style="left:1881px;top:421px;" width="15" height="14" viewBox="0 0 15 14"><rect x="0" y="0" width="15" height="14" rx="1.5" fill="#a6a6a6"/><path d="M2 3L7.5 9L13 3" fill="#f4f4f4"/></svg>
<div class="a" style="left:1647px;top:437px;width:251px;height:21px;background:#e8e8e8;box-sizing:border-box;border:1px solid #b4b4b4"></div>
<div class="a" style="left:1746px;top:437px;width:1px;height:21px;background:#b4b4b4;"></div>
<div class="a t" style="left:1650.40px;top:443px;color:#a4a4a4;font-size:12px;font-weight:400;letter-spacing:1.102px;">Mesh Model...</div>
<div class="a t" style="left:1750.60px;top:443px;color:#a4a4a4;font-size:12px;font-weight:400;letter-spacing:1.256px;">chalet-building-08-...</div>
<div class="a" style="left:1647px;top:457px;width:251px;height:134px;background:#f6efd5;box-sizing:border-box;border:1px solid #b4b4b4"></div>
<div class="a" style="left:1746px;top:457px;width:1px;height:134px;background:#b4b4b4;"></div>
<div class="a t" style="left:1650.40px;top:519px;color:#000;font-size:12px;font-weight:400;letter-spacing:0.952px;">Mesh</div>
<svg class="a" style="left:1747px;top:460px;" width="128" height="128" viewBox="0 0 128 128"><rect x="0" y="0" width="128" height="128" fill="#4d4d4d"/><polygon points="52.7,24.8 48.8,32.6 42.3,41.7 35.8,46.9 29.3,52.1 33.2,56.0 34.5,57.3 34.5,101.4 37.7,101.4 37.7,78.0 42.3,80.6 42.3,105.2 54.0,118.2 54.6,119.5 57.9,116.9 65.6,115.6 77.3,109.1 82.5,111.7 86.4,109.1 86.4,84.5 89.6,84.5 90.3,109.1 93.5,109.8 94.2,61.1 98.7,60.5 86.4,50.8 77.3,40.4 70.8,39.1 65.6,35.2 60.4,31.3" fill="#fcfcfc"/><polygon points="54.0,67.6 70.8,50.8 77.3,40.4 86.4,50.8 98.7,60.5 94.2,61.1 93.5,109.8 90.3,109.1 89.6,84.5 86.4,84.5 86.4,109.1 82.5,111.7 77.3,109.1 65.6,115.6 57.9,116.9 56.6,85.8" fill="#f0f0f0"/></svg>
<svg class="a" style="left:1868px;top:543px;" width="28" height="28" viewBox="0 0 28 28"><rect x="0" y="0" width="28" height="28" fill="#fff"/><g transform="translate(-1,-1) scale(0.85)"><path d="M8 8L12 4L23 4L23 19L18.5 23.5L8 23.5L8 18L4.5 18L4.5 12.5L8 11Z" fill="#5c5c5c"/><path d="M10 10L17 10L17 21.5L10 21.5L10 16L6.5 16L6.5 14L10 12.5Z" fill="#fff"/><path d="M10.8 7.8L13 5.8L20.5 5.8L18.3 7.8Z" fill="#fff"/><rect x="12.5" y="12" width="2" height="2" fill="#5c5c5c"/><path d="M11 18.2Q13.5 20 16 17.8" stroke="#5c5c5c" stroke-width="1.4" fill="none"/></g><path d="M24.5 15V22.5H16M18.5 20L16 22.5L18.5 25" fill="none" stroke="#5c5c5c" stroke-width="2"/></svg>
<svg class="a" style="left:1883px;top:576px;" width="13" height="11" viewBox="0 0 13 11"><path d="M1 5.5H11M7 1.5L11 5.5L7 9.5" fill="none" stroke="#9a9a9a" stroke-width="1.6"/></svg>
<div class="a" style="left:1647px;top:590px;width:251px;height:21px;background:#f6efd5;box-sizing:border-box;border:1px solid #b4b4b4"></div>
<div class="a" style="left:1746px;top:590px;width:1px;height:21px;background:#b4b4b4;"></div>
<div class="a t" style="left:1650.40px;top:596px;color:#000;font-size:12px;font-weight:400;letter-spacing:0.808px;">Position X</div>
<div class="a t" style="left:1750.60px;top:596px;color:#000;font-size:12px;font-weight:400;letter-spacing:0.312px;">0</div>
<svg class="a" style="left:1881px;top:593px;" width="14" height="14" viewBox="0 0 14 14"><circle cx="7" cy="7" r="7" fill="#a6a6a6"/><path d="M4 5.5L7 2.8L10 5.5M4 8.5L7 11.2L10 8.5" fill="none" stroke="#f4f4f4" stroke-width="1.5"/><path d="M3 7H11" stroke="#f4f4f4" stroke-width="1"/></svg>
<div class="a" style="left:1647px;top:610px;width:251px;height:21px;background:#f6efd5;box-sizing:border-box;border:1px solid #b4b4b4"></div>
<div class="a" style="left:1746px;top:610px;width:1px;height:21px;background:#b4b4b4;"></div>
<div class="a t" style="left:1650.40px;top:616px;color:#000;font-size:12px;font-weight:400;letter-spacing:0.832px;">Position Y</div>
<div class="a t" style="left:1750.60px;top:616px;color:#000;font-size:12px;font-weight:400;letter-spacing:0.312px;">0</div>
<svg class="a" style="left:1881px;top:613px;" width="14" height="14" viewBox="0 0 14 14"><circle cx="7" cy="7" r="7" fill="#a6a6a6"/><path d="M4 5.5L7 2.8L10 5.5M4 8.5L7 11.2L10 8.5" fill="none" stroke="#f4f4f4" stroke-width="1.5"/><path d="M3 7H11" stroke="#f4f4f4" stroke-width="1"/></svg>
<div class="a" style="left:1647px;top:630px;width:251px;height:21px;background:#f6efd5;box-sizing:border-box;border:1px solid #b4b4b4"></div>
<div class="a" style="left:1746px;top:630px;width:1px;height:21px;background:#b4b4b4;"></div>
<div class="a t" style="left:1650.40px;top:636px;color:#000;font-size:12px;font-weight:400;letter-spacing:0.882px;">Position Z</div>
<div class="a t" style="left:1750.60px;top:636px;color:#000;font-size:12px;font-weight:400;letter-spacing:0.312px;">0</div>
<svg class="a" style="left:1881px;top:633px;" width="14" height="14" viewBox="0 0 14 14"><circle cx="7" cy="7" r="7" fill="#a6a6a6"/><path d="M4 5.5L7 2.8L10 5.5M4 8.5L7 11.2L10 8.5" fill="none" stroke="#f4f4f4" stroke-width="1.5"/><path d="M3 7H11" stroke="#f4f4f4" stroke-width="1"/></svg>
<div class="a" style="left:1647px;top:650px;width:251px;height:21px;background:#f6efd5;box-sizing:border-box;border:1px solid #b4b4b4"></div>
<div class="a" style="left:1746px;top:650px;width:1px;height:21px;background:#b4b4b4;"></div>
<div class="a t" style="left:1650.40px;top:656px;color:#000;font-size:12px;font-weight:400;letter-spacing:1.117px;">Rotation X</div>
<div class="a t" style="left:1750.60px;top:656px;color:#000;font-size:12px;font-weight:400;letter-spacing:0.312px;">0</div>
<svg class="a" style="left:1881px;top:653px;" width="14" height="14" viewBox="0 0 14 14"><circle cx="7" cy="7" r="7" fill="#a6a6a6"/><path d="M4 5.5L7 2.8L10 5.5M4 8.5L7 11.2L10 8.5" fill="none" stroke="#f4f4f4" stroke-width="1.5"/><path d="M3 7H11" stroke="#f4f4f4" stroke-width="1"/></svg>
<div class="a" style="left:1647px;top:670px;width:251px;height:21px;background:#f6efd5;box-sizing:border-box;border:1px solid #b4b4b4"></div>
<div class="a" style="left:1746px;top:670px;width:1px;height:21px;background:#b4b4b4;"></div>
<div class="a t" style="left:1650.40px;top:676px;color:#000;font-size:12px;font-weight:400;letter-spacing:1.141px;">Rotation Y</div>
<div class="a t" style="left:1750.60px;top:676px;color:#000;font-size:12px;font-weight:400;letter-spacing:0.312px;">0</div>
<svg class="a" style="left:1881px;top:673px;" width="14" height="14" viewBox="0 0 14 14"><circle cx="7" cy="7" r="7" fill="#a6a6a6"/><path d="M4 5.5L7 2.8L10 5.5M4 8.5L7 11.2L10 8.5" fill="none" stroke="#f4f4f4" stroke-width="1.5"/><path d="M3 7H11" stroke="#f4f4f4" stroke-width="1"/></svg>
<div class="a" style="left:1647px;top:690px;width:251px;height:21px;background:#f6efd5;box-sizing:border-box;border:1px solid #b4b4b4"></div>
<div class="a" style="left:1746px;top:690px;width:1px;height:21px;background:#b4b4b4;"></div>
<div class="a t" style="left:1650.40px;top:696px;color:#000;font-size:12px;font-weight:400;letter-spacing:1.193px;">Rotation Z</div>
<div class="a t" style="left:1750.60px;top:696px;color:#000;font-size:12px;font-weight:400;letter-spacing:0.312px;">0</div>
<svg class="a" style="left:1881px;top:693px;" width="14" height="14" viewBox="0 0 14 14"><circle cx="7" cy="7" r="7" fill="#a6a6a6"/><path d="M4 5.5L7 2.8L10 5.5M4 8.5L7 11.2L10 8.5" fill="none" stroke="#f4f4f4" stroke-width="1.5"/><path d="M3 7H11" stroke="#f4f4f4" stroke-width="1"/></svg>
<div class="a" style="left:1647px;top:710px;width:251px;height:21px;background:#f6efd5;box-sizing:border-box;border:1px solid #b4b4b4"></div>
<div class="a" style="left:1746px;top:710px;width:1px;height:21px;background:#b4b4b4;"></div>
<div class="a t" style="left:1650.40px;top:716px;color:#000;font-size:12px;font-weight:400;letter-spacing:0.722px;">Size X</div>
<div class="a t" style="left:1750.60px;top:716px;color:#000;font-size:12px;font-weight:400;letter-spacing:0.312px;">1</div>
<svg class="a" style="left:1881px;top:713px;" width="14" height="14" viewBox="0 0 14 14"><circle cx="7" cy="7" r="7" fill="#a6a6a6"/><path d="M4 5.5L7 2.8L10 5.5M4 8.5L7 11.2L10 8.5" fill="none" stroke="#f4f4f4" stroke-width="1.5"/><path d="M3 7H11" stroke="#f4f4f4" stroke-width="1"/></svg>
<div class="a" style="left:1647px;top:730px;width:251px;height:21px;background:#f6efd5;box-sizing:border-box;border:1px solid #b4b4b4"></div>
<div class="a" style="left:1746px;top:730px;width:1px;height:21px;background:#b4b4b4;"></div>
<div class="a t" style="left:1650.40px;top:736px;color:#000;font-size:12px;font-weight:400;letter-spacing:0.766px;">Size Y</div>
<div class="a t" style="left:1750.60px;top:736px;color:#000;font-size:12px;font-weight:400;letter-spacing:0.312px;">1</div>
<svg class="a" style="left:1881px;top:733px;" width="14" height="14" viewBox="0 0 14 14"><circle cx="7" cy="7" r="7" fill="#a6a6a6"/><path d="M4 5.5L7 2.8L10 5.5M4 8.5L7 11.2L10 8.5" fill="none" stroke="#f4f4f4" stroke-width="1.5"/><path d="M3 7H11" stroke="#f4f4f4" stroke-width="1"/></svg>
<div class="a" style="left:1647px;top:750px;width:251px;height:21px;background:#f6efd5;box-sizing:border-box;border:1px solid #b4b4b4"></div>
<div class="a" style="left:1746px;top:750px;width:1px;height:21px;background:#b4b4b4;"></div>
<div class="a t" style="left:1650.40px;top:756px;color:#000;font-size:12px;font-weight:400;letter-spacing:0.857px;">Size Z</div>
<div class="a t" style="left:1750.60px;top:756px;color:#000;font-size:12px;font-weight:400;letter-spacing:0.312px;">1</div>
<svg class="a" style="left:1881px;top:753px;" width="14" height="14" viewBox="0 0 14 14"><circle cx="7" cy="7" r="7" fill="#a6a6a6"/><path d="M4 5.5L7 2.8L10 5.5M4 8.5L7 11.2L10 8.5" fill="none" stroke="#f4f4f4" stroke-width="1.5"/><path d="M3 7H11" stroke="#f4f4f4" stroke-width="1"/></svg>
<div class="a" style="left:1647px;top:770px;width:251px;height:21px;background:#f6efd5;box-sizing:border-box;border:1px solid #b4b4b4"></div>
<div class="a" style="left:1746px;top:770px;width:1px;height:21px;background:#b4b4b4;"></div>
<div class="a t" style="left:1650.40px;top:776px;color:#000;font-size:12px;font-weight:400;letter-spacing:0.991px;">Terrain Assi...</div>
<div class="a t" style="left:1750.60px;top:776px;color:#000;font-size:12px;font-weight:400;letter-spacing:1.404px;">None</div>
<svg class="a" style="left:1881px;top:774px;" width="15" height="14" viewBox="0 0 15 14"><rect x="0" y="0" width="15" height="14" rx="1.5" fill="#a6a6a6"/><path d="M2 3L7.5 9L13 3" fill="#f4f4f4"/></svg>
<div class="a" style="left:1647px;top:791px;width:251px;height:33px;background:#f6efd5;box-sizing:border-box;border-left:1px solid #b4b4b4;border-right:1px solid #b4b4b4"></div>
<div class="a" style="left:1649px;top:793px;width:247px;height:29px;background:#c18f00;"></div>
<svg class="a" style="left:1653px;top:801px;" width="13" height="13" viewBox="0 0 13 13"><circle cx="6.5" cy="6.5" r="6" fill="#f8f0dc"/><path d="M3.5 5.5L6.5 8.5L9.5 5.5" fill="none" stroke="#c18f00" stroke-width="2"/></svg>
<div class="a t" style="left:1670.50px;top:801px;color:#f8f0dc;font-size:12px;font-weight:400;letter-spacing:1.083px;">Motion Setting</div>
<div class="a" style="left:1647px;top:824px;width:251px;height:21px;background:#e8e8e8;box-sizing:border-box;border:1px solid #b4b4b4"></div>
<div class="a" style="left:1746px;top:824px;width:1px;height:21px;background:#b4b4b4;"></div>
<div class="a t" style="left:1650.40px;top:830px;color:#a4a4a4;font-size:12px;font-weight:400;letter-spacing:1.262px;">Motion Name</div>
<div class="a t" style="left:1750.60px;top:830px;color:#a4a4a4;font-size:12px;font-weight:400;letter-spacing:0.000px;"></div>
<div class="a" style="left:1647px;top:844px;width:251px;height:134px;background:#f6efd5;box-sizing:border-box;border:1px solid #b4b4b4"></div>
<div class="a" style="left:1746px;top:844px;width:1px;height:134px;background:#b4b4b4;"></div>
<div class="a t" style="left:1650.40px;top:906px;color:#000;font-size:12px;font-weight:400;letter-spacing:1.254px;">Motion</div>
<svg class="a" style="left:1882px;top:963px;" width="13" height="11" viewBox="0 0 13 11"><path d="M1 5.5H11M7 1.5L11 5.5L7 9.5" fill="none" stroke="#9a9a9a" stroke-width="1.6"/></svg>
<div class="a" style="left:1647px;top:978px;width:251px;height:33px;background:#f6efd5;box-sizing:border-box;border-left:1px solid #b4b4b4;border-right:1px solid #b4b4b4"></div>
<div class="a" style="left:1649px;top:980px;width:247px;height:29px;background:#c18f00;"></div>
<svg class="a" style="left:1653px;top:988px;" width="13" height="13" viewBox="0 0 13 13"><circle cx="6.5" cy="6.5" r="6" fill="#f8f0dc"/><path d="M3.5 5.5L6.5 8.5L9.5 5.5" fill="none" stroke="#c18f00" stroke-width="2"/></svg>
<div class="a t" style="left:1670.50px;top:988px;color:#f8f0dc;font-size:12px;font-weight:400;letter-spacing:0.828px;">Materials Used</div>
<div class="a" style="left:1647px;top:1011px;width:251px;height:22px;background:#e8e8e8;box-sizing:border-box;border:1px solid #b4b4b4"></div>
<div class="a" style="left:1746px;top:1011px;width:1px;height:22px;background:#b4b4b4;"></div>
<div class="a t" style="left:1650.40px;top:1017px;color:#a4a4a4;font-size:12px;font-weight:400;letter-spacing:1.188px;">Material Na...</div>
<div class="a t" style="left:1750.60px;top:1017px;color:#a4a4a4;font-size:12px;font-weight:400;letter-spacing:1.318px;">main-chalet-pack-b...</div>
<div class="a" style="left:1647px;top:1033px;width:268px;height:6px;background:#f0f0f0;"></div>
<div class="a" style="left:5px;top:1039px;width:1910px;height:36px;background:#6a6a6a;"></div>
<div class="a t" style="left:7.30px;top:1050px;color:#f2f2f2;font-size:12px;font-weight:400;letter-spacing:1.187px;">Manage all materials used in the game, including 3D models, textures, sprites, images, and sounds. 3D stamps and 2D stamps are also created here.</div>
<div class="a" style="left:1712px;top:1045px;width:92px;height:24px;background:#b6b6b6;border-radius:5px"></div>
<svg class="a" style="left:1717px;top:1048px;" width="18" height="18" viewBox="0 0 18 18"><rect x="0" y="0" width="18" height="18" rx="2" fill="#5b8de2"/><path d="M3.5 9L7.5 13L14.5 5" fill="none" stroke="#fff" stroke-width="2.4"/></svg>
<div class="a t" style="left:1742.00px;top:1051px;color:#000;font-size:12px;font-weight:400;letter-spacing:-0.344px;">OK</div>
<div class="a" style="left:1808px;top:1045px;width:101px;height:24px;background:#b6b6b6;border-radius:5px"></div>
<svg class="a" style="left:1813px;top:1048px;" width="18" height="18" viewBox="0 0 18 18"><rect x="0" y="0" width="18" height="18" rx="2" fill="#e05a83"/><path d="M4.5 4.5L13.5 13.5M13.5 4.5L4.5 13.5" fill="none" stroke="#fff" stroke-width="2.4"/></svg>
<div class="a t" style="left:1838.00px;top:1051px;color:#000;font-size:12px;font-weight:400;letter-spacing:-0.012px;">Cancel</div>
</body></html>
